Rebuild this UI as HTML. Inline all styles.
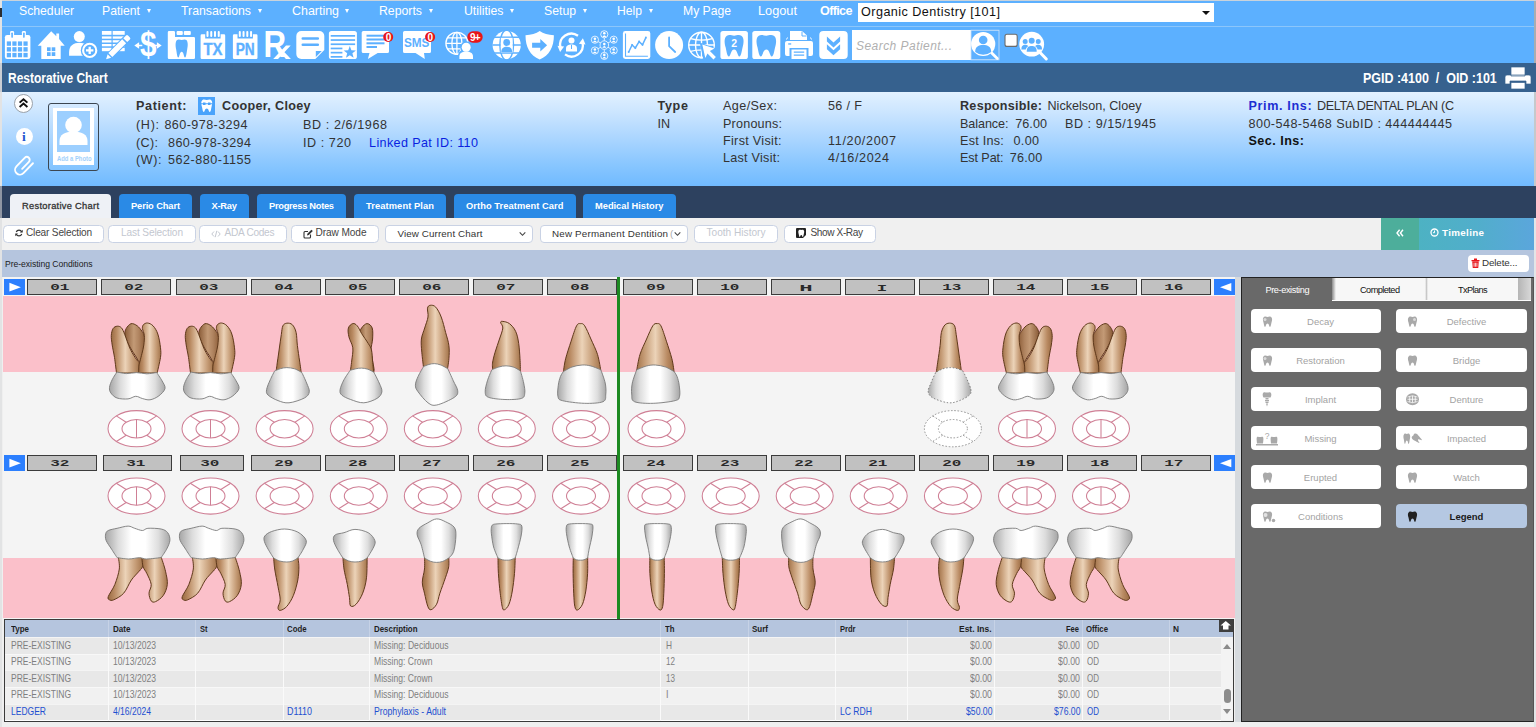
<!DOCTYPE html><html><head><meta charset="utf-8"><title>Restorative Chart</title><style>html,body{margin:0;padding:0}body{width:1536px;height:727px;overflow:hidden;position:relative;background:#efefef;font-family:"Liberation Sans",sans-serif}
.a{position:absolute;display:block}.t{position:absolute;white-space:pre;line-height:1}
.nb{background:#c1c1c1;border:1px solid #3b3b3b;box-sizing:border-box;text-align:center;overflow:hidden;font-size:0;line-height:0}
.nt{font-family:"Liberation Mono",monospace;font-size:9.7px;font-weight:bold;color:#2a2a2a;transform-origin:50% 50%}
</style></head><body>
<div class="a" style="left:0px;top:0px;width:1536.00px;height:727.00px;background:#efefef;"></div>
<div class="a" style="left:0px;top:0px;width:1536.00px;height:1.00px;background:#c9d3dc;"></div>
<div class="a" style="left:2px;top:1px;width:1532.00px;height:62.00px;background:#5cb0ff;"></div>
<div class="a" style="left:2px;top:26px;width:1532.00px;height:1.00px;background:#8cc6fb;"></div>
<div class="a" style="left:0px;top:63px;width:1536.00px;height:28.50px;background:#36618e;"></div>
<div class="a" style="left:2px;top:91.5px;width:1532.00px;height:94.80px;background:;background:linear-gradient(#e2f1ff 0%,#cbe5ff 22%,#aad5ff 50%,#8ac7ff 76%,#70baff 100%);"></div>
<div class="a" style="left:0px;top:186.3px;width:1536.00px;height:31.70px;background:#2d415f;"></div>
<div class="a" style="left:2px;top:218px;width:1532.00px;height:32.00px;background:#f0f0f0;"></div>
<div class="a" style="left:2px;top:250px;width:1532.00px;height:27.00px;background:#b5c5de;"></div>
<span class="t" style="left:19.00px;top:4.00px;font-size:13.6px;color:#fff;transform:scaleX(0.8984);transform-origin:0 0;">Scheduler</span>
<span class="t" style="left:102.00px;top:4.00px;font-size:13.6px;color:#fff;transform:scaleX(0.8977);transform-origin:0 0;">Patient</span>
<div class="a" style="left:146.7px;top:8.6px;border:2.4px solid transparent;border-top:4px solid #fff;border-bottom:0"></div>
<span class="t" style="left:181.00px;top:4.00px;font-size:13.6px;color:#fff;transform:scaleX(0.9052);transform-origin:0 0;">Transactions</span>
<div class="a" style="left:257.7px;top:8.6px;border:2.4px solid transparent;border-top:4px solid #fff;border-bottom:0"></div>
<span class="t" style="left:292.00px;top:4.00px;font-size:13.6px;color:#fff;transform:scaleX(0.9146);transform-origin:0 0;">Charting</span>
<div class="a" style="left:344.7px;top:8.6px;border:2.4px solid transparent;border-top:4px solid #fff;border-bottom:0"></div>
<span class="t" style="left:379.00px;top:4.00px;font-size:13.6px;color:#fff;transform:scaleX(0.9032);transform-origin:0 0;">Reports</span>
<div class="a" style="left:428.7px;top:8.6px;border:2.4px solid transparent;border-top:4px solid #fff;border-bottom:0"></div>
<span class="t" style="left:463.50px;top:4.00px;font-size:13.6px;color:#fff;transform:scaleX(0.9016);transform-origin:0 0;">Utilities</span>
<div class="a" style="left:509.7px;top:8.6px;border:2.4px solid transparent;border-top:4px solid #fff;border-bottom:0"></div>
<span class="t" style="left:544.00px;top:4.00px;font-size:13.6px;color:#fff;transform:scaleX(0.9006);transform-origin:0 0;">Setup</span>
<div class="a" style="left:582.7px;top:8.6px;border:2.4px solid transparent;border-top:4px solid #fff;border-bottom:0"></div>
<span class="t" style="left:616.50px;top:4.00px;font-size:13.6px;color:#fff;transform:scaleX(0.8939);transform-origin:0 0;">Help</span>
<div class="a" style="left:648.7px;top:8.6px;border:2.4px solid transparent;border-top:4px solid #fff;border-bottom:0"></div>
<span class="t" style="left:683.00px;top:4.00px;font-size:13.6px;color:#fff;transform:scaleX(0.8946);transform-origin:0 0;">My Page</span>
<span class="t" style="left:758.00px;top:4.00px;font-size:13.6px;color:#fff;transform:scaleX(0.9380);transform-origin:0 0;">Logout</span>
<span class="t" style="left:820.00px;top:5.00px;font-size:12.6px;font-weight:bold;color:#fff;letter-spacing:-0.641px;">Office</span>
<div class="a" style="left:858px;top:2.5px;width:356.00px;height:19.00px;background:#fff;"></div>
<span class="t" style="left:861.00px;top:6.00px;font-size:12.6px;color:#111;letter-spacing:0.464px;">Organic Dentistry [101]</span>
<div class="a" style="left:1201.5px;top:10.5px;border:4px solid transparent;border-top:4.5px solid #111;border-bottom:0"></div>
<span class="t" style="left:8.10px;top:71.00px;font-size:14px;font-weight:bold;color:#fff;transform:scaleX(0.8543);transform-origin:0 0;">Restorative Chart</span>
<span class="t" style="left:1362.80px;top:71.00px;font-size:14px;font-weight:bold;color:#fff;transform:scaleX(0.8910);transform-origin:0 0;">PGID :4100  /  OID :101</span>
<span class="t" style="left:136.00px;top:100.00px;font-size:12.6px;font-weight:bold;color:#333;letter-spacing:0.616px;">Patient:</span>
<span class="t" style="left:222.00px;top:100.00px;font-size:12.6px;font-weight:bold;color:#333;letter-spacing:0.326px;">Cooper, Cloey</span>
<span class="t" style="left:136.00px;top:119.00px;font-size:12.6px;color:#333;letter-spacing:0.672px;">(H):</span>
<span class="t" style="left:164.40px;top:119.00px;font-size:12.6px;color:#333;letter-spacing:0.424px;">860-978-3294</span>
<span class="t" style="left:136.00px;top:137.00px;font-size:12.6px;color:#333;letter-spacing:0.339px;">(C):</span>
<span class="t" style="left:168.00px;top:137.00px;font-size:12.6px;color:#333;letter-spacing:0.415px;">860-978-3294</span>
<span class="t" style="left:136.00px;top:154.00px;font-size:12.6px;color:#333;letter-spacing:0.573px;">(W):</span>
<span class="t" style="left:168.00px;top:154.00px;font-size:12.6px;color:#333;letter-spacing:0.500px;">562-880-1155</span>
<span class="t" style="left:303.00px;top:119.00px;font-size:12.6px;color:#333;letter-spacing:0.582px;">BD : 2/6/1968</span>
<span class="t" style="left:303.00px;top:137.00px;font-size:12.6px;color:#333;letter-spacing:0.556px;">ID : 720</span>
<span class="t" style="left:369.00px;top:137.00px;font-size:12.6px;color:#0a1fe0;letter-spacing:0.371px;">Linked Pat ID: 110</span>
<span class="t" style="left:657.50px;top:100.00px;font-size:12.6px;font-weight:bold;color:#333;letter-spacing:0.677px;">Type</span>
<span class="t" style="left:657.50px;top:118.00px;font-size:12.6px;color:#333;letter-spacing:-0.094px;">IN</span>
<span class="t" style="left:723.00px;top:100.00px;font-size:12.6px;color:#333;letter-spacing:0.413px;">Age/Sex:</span>
<span class="t" style="left:723.00px;top:118.00px;font-size:12.6px;color:#333;letter-spacing:0.197px;">Pronouns:</span>
<span class="t" style="left:723.00px;top:135.00px;font-size:12.6px;color:#333;letter-spacing:0.314px;">First Visit:</span>
<span class="t" style="left:723.00px;top:152.00px;font-size:12.6px;color:#333;letter-spacing:0.263px;">Last Visit:</span>
<span class="t" style="left:828.00px;top:100.00px;font-size:12.6px;color:#333;letter-spacing:0.359px;">56 / F</span>
<span class="t" style="left:828.00px;top:135.00px;font-size:12.6px;color:#333;letter-spacing:0.655px;">11/20/2007</span>
<span class="t" style="left:828.00px;top:152.00px;font-size:12.6px;color:#333;letter-spacing:0.621px;">4/16/2024</span>
<span class="t" style="left:960.00px;top:100.00px;font-size:12.6px;font-weight:bold;color:#333;letter-spacing:0.266px;">Responsible:</span>
<span class="t" style="left:1047.50px;top:100.00px;font-size:12.6px;color:#333;letter-spacing:0.014px;">Nickelson, Cloey</span>
<span class="t" style="left:960.00px;top:118.00px;font-size:12.6px;color:#333;letter-spacing:-0.074px;">Balance:</span>
<span class="t" style="left:1015.20px;top:118.00px;font-size:12.6px;color:#333;letter-spacing:0.071px;">76.00</span>
<span class="t" style="left:1065.00px;top:118.00px;font-size:12.6px;color:#333;letter-spacing:0.536px;">BD : 9/15/1945</span>
<span class="t" style="left:960.00px;top:135.00px;font-size:12.6px;color:#333;letter-spacing:0.243px;">Est Ins:</span>
<span class="t" style="left:1013.50px;top:135.00px;font-size:12.6px;color:#333;letter-spacing:0.328px;">0.00</span>
<span class="t" style="left:960.00px;top:152.00px;font-size:12.6px;color:#333;letter-spacing:-0.087px;">Est Pat:</span>
<span class="t" style="left:1009.70px;top:152.00px;font-size:12.6px;color:#333;letter-spacing:0.246px;">76.00</span>
<span class="t" style="left:1248.50px;top:100.00px;font-size:12.6px;font-weight:bold;color:#1c2ed2;letter-spacing:0.645px;">Prim. Ins:</span>
<span class="t" style="left:1317.00px;top:100.00px;font-size:12.6px;color:#333;letter-spacing:-0.316px;">DELTA DENTAL PLAN (C</span>
<span class="t" style="left:1248.50px;top:118.00px;font-size:12.6px;color:#333;letter-spacing:0.449px;">800-548-5468 SubID : 444444445</span>
<span class="t" style="left:1248.50px;top:135.00px;font-size:12.6px;font-weight:bold;color:#111;letter-spacing:0.463px;">Sec. Ins:</span>
<div class="a" style="left:14px;top:94.2px;width:19px;height:19px;border-radius:50%;background:#fff;border:1px solid #9aa1a9;box-sizing:border-box"></div>
<svg class="a" style="left:14px;top:94.2px" width="19" height="19" viewBox="0 0 19 19"><path d="M5.6 8.6 L9.5 5.2 L13.4 8.6 M5.6 13 L9.5 9.6 L13.4 13" fill="none" stroke="#111" stroke-width="1.9"/></svg>
<div class="a" style="left:15.5px;top:127.7px;width:17px;height:17px;border-radius:50%;background:#fff"></div>
<span class="t" style="left:22.10px;top:130.00px;font-size:13.5px;font-weight:bold;font-family:&quot;Liberation Serif&quot;,sans-serif;color:#2455cf;">i</span>
<svg class="a" style="left:0;top:0" width="60" height="190" viewBox="0 0 60 190"><g transform="translate(23.6 165) rotate(-46) scale(1.08)"><path d="M-3.500 1.500 H5.500 a2.700 2.700 0 0 0 0 -5.400 H-5.500 a4.500 4.500 0 0 0 0 9 H7.200" fill="none" stroke="#fff" stroke-width="1.750" stroke-linecap="round"/></g></svg>
<div class="a" style="left:47.5px;top:103px;width:51.5px;height:68px;border:1px solid #3c4650;border-radius:3px;box-sizing:border-box"></div>
<div class="a" style="left:53px;top:108px;width:41.00px;height:57.00px;background:#fff;"></div>
<div class="a" style="left:57px;top:111px;width:33.00px;height:41.00px;background:#9ccfff;"></div>
<svg class="a" style="left:57px;top:111px" width="33" height="41" viewBox="0 0 33 41"><circle cx="16.5" cy="14" r="8.3" fill="#fff"/><path d="M2.5 34 v-4 c0-6 5-9.5 14-9.5 s14 3.500 14 9.500 v4 z" fill="#fff"/></svg>
<span class="t" style="left:56.50px;top:156.00px;font-size:6.4px;font-weight:bold;color:#a3d1fb;transform:scaleX(0.9166);transform-origin:0 0;">Add a Photo</span>
<div class="a" style="left:197.5px;top:97px;width:17.50px;height:17.50px;background:#4aa3fb;"></div>
<svg class="a" style="left:197.5px;top:97px" width="17.5" height="17.5" viewBox="0 0 35 35"><path d="M9 6 c3-2 6 0 8.500 0 s5.500-2 8.500 0 c4 3 2 10 1 14 c-1 5-1.500 10-3.500 10 s-2-7-6-7 s-4 7-6 7 s-2.500-5-3.500-10 c-1-4-3-11 1-14z" fill="#fff"/><path d="M6 13.500 h23" stroke="#4aa3fb" stroke-width="2"/><rect x="10" y="11" width="5" height="5" fill="#4aa3fb"/><rect x="20" y="11" width="5" height="5" fill="#4aa3fb"/></svg>
<svg class="a" style="left:1504px;top:65.5px" width="28" height="24" viewBox="0 0 28 24"><path d="M7 1 h14 v9 h-14z M1 11 q0-2 2-2 h22 q2 0 2 2 v7 h-5 v-3 h-16 v3 h-5z M7 16.500 h14 v6.500 h-14z" fill="#fff" stroke="#36618e" stroke-width=".7"/></svg>
<div class="a" style="left:10px;top:194px;width:101.00px;height:24.00px;background:#eef1f6;border-radius:4px 4px 0 0;"></div>
<span class="t" style="left:22.00px;top:202.00px;font-size:9.3px;color:#333;letter-spacing:0.291px;-webkit-text-stroke:.3px #333;">Restorative Chart</span>
<div class="a" style="left:119px;top:194px;width:73.00px;height:24.00px;background:#2a8ae6;border-radius:4px 4px 0 0;"></div>
<span class="t" style="left:131.00px;top:202.00px;font-size:9.3px;font-weight:bold;color:#fff;letter-spacing:-0.113px;">Perio Chart</span>
<div class="a" style="left:199.5px;top:194px;width:49.50px;height:24.00px;background:#2a8ae6;border-radius:4px 4px 0 0;"></div>
<span class="t" style="left:211.50px;top:202.00px;font-size:9.3px;font-weight:bold;color:#fff;letter-spacing:-0.215px;">X-Ray</span>
<div class="a" style="left:257px;top:194px;width:89.00px;height:24.00px;background:#2a8ae6;border-radius:4px 4px 0 0;"></div>
<span class="t" style="left:269.00px;top:202.00px;font-size:9.3px;font-weight:bold;color:#fff;letter-spacing:-0.287px;">Progress Notes</span>
<div class="a" style="left:354px;top:194px;width:92.00px;height:24.00px;background:#2a8ae6;border-radius:4px 4px 0 0;"></div>
<span class="t" style="left:366.00px;top:202.00px;font-size:9.3px;font-weight:bold;color:#fff;letter-spacing:0.103px;">Treatment Plan</span>
<div class="a" style="left:454px;top:194px;width:121.50px;height:24.00px;background:#2a8ae6;border-radius:4px 4px 0 0;"></div>
<span class="t" style="left:466.00px;top:202.00px;font-size:9.3px;font-weight:bold;color:#fff;letter-spacing:0.074px;">Ortho Treatment Card</span>
<div class="a" style="left:583px;top:194px;width:92.50px;height:24.00px;background:#2a8ae6;border-radius:4px 4px 0 0;"></div>
<span class="t" style="left:595.00px;top:202.00px;font-size:9.3px;font-weight:bold;color:#fff;letter-spacing:-0.016px;">Medical History</span>
<div class="a" style="left:2.7px;top:224.5px;width:101.7px;height:18px;background:#fff;border:1px solid #c9d2e4;border-radius:4.5px;box-sizing:border-box"></div>
<span class="t" style="left:26.00px;top:228.00px;font-size:10.1px;color:#444;letter-spacing:-0.175px;">Clear Selection</span>
<div class="a" style="left:107.7px;top:224.5px;width:88.2px;height:18px;background:#fff;border:1px solid #c9d2e4;border-radius:4.5px;box-sizing:border-box"></div>
<span class="t" style="left:121.00px;top:228.00px;font-size:10.1px;color:#c3c7cf;letter-spacing:-0.109px;">Last Selection</span>
<div class="a" style="left:199.2px;top:224.5px;width:88.2px;height:18px;background:#fff;border:1px solid #c9d2e4;border-radius:4.5px;box-sizing:border-box"></div>
<span class="t" style="left:224.50px;top:228.00px;font-size:10.1px;color:#c3c7cf;letter-spacing:-0.273px;">ADA Codes</span>
<div class="a" style="left:290.7px;top:224.5px;width:88.7px;height:18px;background:#fff;border:1px solid #c9d2e4;border-radius:4.5px;box-sizing:border-box"></div>
<span class="t" style="left:315.50px;top:228.00px;font-size:10.1px;color:#444;letter-spacing:-0.076px;">Draw Mode</span>
<div class="a" style="left:693.7px;top:224.5px;width:84.2px;height:18px;background:#fff;border:1px solid #c9d2e4;border-radius:4.5px;box-sizing:border-box"></div>
<span class="t" style="left:706.50px;top:228.00px;font-size:10.1px;color:#c3c7cf;letter-spacing:0.008px;">Tooth History</span>
<div class="a" style="left:783.7px;top:224.5px;width:92.2px;height:18px;background:#fff;border:1px solid #c9d2e4;border-radius:4.5px;box-sizing:border-box"></div>
<span class="t" style="left:810.50px;top:228.00px;font-size:10.1px;color:#444;letter-spacing:-0.401px;">Show X-Ray</span>
<svg class="a" style="left:14.6px;top:229.2px" width="8" height="8" viewBox="0 0 9 9"><path d="M7.600 3.400 A3.300 3.300 0 0 0 1.400 3.400 M1.400 5.600 A3.300 3.300 0 0 0 7.600 5.600" fill="none" stroke="#333" stroke-width="1.300"/><path d="M8.700 0.800 v3.200 h-3.200z M0.300 8.200 v-3.200 h3.200z" fill="#333"/></svg>
<svg class="a" style="left:211px;top:230px" width="10" height="8" viewBox="0 0 10 8"><path d="M3 1.500 L0.800 4 L3 6.500 M7 1.500 L9.200 4 L7 6.500 M5.800 0.800 L4.200 7.200" fill="none" stroke="#c3c7cf" stroke-width="1"/></svg>
<svg class="a" style="left:302.5px;top:228.5px" width="10" height="10" viewBox="0 0 10 10"><path d="M7.500 5.500 v2.500 q0 1-1 1 h-4.500 q-1 0-1-1 v-4.500 q0-1 1-1 h3" fill="none" stroke="#333" stroke-width="1.100"/><path d="M4 6.500 l0.400-1.800 l4-4 l1.400 1.400 l-4 4z" fill="#333"/></svg>
<svg class="a" style="left:796px;top:228px" width="10.500" height="10.500" viewBox="0 0 21 21"><rect x="0" y="0" width="20" height="20" rx="2" fill="#222"/><path d="M6 4 c2-1 3 0 4.500 0 s2.500-1 4.500 0 c2.500 2 1 6 0.500 8.500 c-0.500 2.500-1 5.500-2 5.500 s-1-4-3-4 s-2 4-3 4 s-1.500-3-2-5.500 c-0.500-2.500-2-6.500 0.500-8.500z" fill="#fff"/><path d="M14 20 l6-6 v6z" fill="#fff"/></svg>
<div class="a" style="left:385px;top:224.5px;width:148px;height:18px;background:#fff;border:1px solid #c9d2e4;border-radius:4px;box-sizing:border-box"></div>
<span class="t" style="left:397.50px;top:229.00px;font-size:9.8px;color:#333;letter-spacing:0.109px;">View Current Chart</span>
<svg class="a" style="left:518.5px;top:230.5px" width="7" height="6" viewBox="0 0 7 6"><path d="M0.700 1.300 L3.500 4.300 L6.300 1.300" fill="none" stroke="#444" stroke-width="1.100"/></svg>
<div class="a" style="left:539.5px;top:224.5px;width:148.0px;height:18px;background:#fff;border:1px solid #c9d2e4;border-radius:4px;box-sizing:border-box"></div>
<span class="t" style="left:552.00px;top:229.00px;font-size:9.8px;color:#333;letter-spacing:0.198px;">New Permanent Dentition</span>
<svg class="a" style="left:673.5px;top:230.5px" width="7" height="6" viewBox="0 0 7 6"><path d="M0.700 1.300 L3.500 4.300 L6.300 1.300" fill="none" stroke="#444" stroke-width="1.100"/></svg>
<span class="t" style="left:670.00px;top:229.00px;font-size:9.8px;color:#aaa;">(</span>
<div class="a" style="left:1381px;top:218px;width:37.50px;height:32.00px;background:#4dae9b;"></div>
<div class="a" style="left:1418.5px;top:218px;width:115.50px;height:32.00px;background:;background:linear-gradient(90deg,#4db2c3 0%,#51aecb 50%,#5ba6dc 100%);"></div>
<svg class="a" style="left:1396px;top:228.500px" width="8" height="8" viewBox="0 0 8 8"><path d="M3.600 0.800 L1 4 L3.600 7.200 M7 0.800 L4.400 4 L7 7.200" fill="none" stroke="#fff" stroke-width="1.400"/></svg>
<svg class="a" style="left:1430px;top:228px" width="9" height="9" viewBox="0 0 9 9"><circle cx="4.500" cy="4.500" r="3.500" fill="none" stroke="#fff" stroke-width="1.300"/><path d="M4.500 2.500 v2.200 h-1.500" fill="none" stroke="#fff" stroke-width="1"/></svg>
<span class="t" style="left:1442.00px;top:228.00px;font-size:9.8px;font-weight:bold;color:#fff;letter-spacing:0.346px;">Timeline</span>
<span class="t" style="left:5.00px;top:260.00px;font-size:8.6px;color:#1b1b1b;letter-spacing:-0.040px;">Pre-existing Conditions</span>
<div class="a" style="left:1468px;top:255px;width:61.00px;height:16.50px;background:#fff;border-radius:4px;"></div>
<svg class="a" style="left:1471px;top:258px" width="9" height="10.500" viewBox="0 0 18 21"><path d="M1 4 h16 v2.500 h-16z M6 1 h6 v3 h-6z M2.500 7 h13 l-1 13 h-11z" fill="#e8161b"/><path d="M6.200 9.500 v8 M9 9.500 v8 M11.800 9.500 v8" stroke="#fff" stroke-width="1.500"/></svg>
<span class="t" style="left:1482.00px;top:258.00px;font-size:9.8px;color:#333;letter-spacing:-0.125px;">Delete...</span>
<div class="a" style="left:3px;top:277px;width:1232.00px;height:341.50px;background:#f4f4f4;"></div>
<div class="a" style="left:3px;top:295.5px;width:1232.00px;height:76.50px;background:#fbc0ca;"></div>
<div class="a" style="left:3px;top:558px;width:1232.00px;height:59.50px;background:#fbc0ca;"></div>
<div class="a" style="left:1235px;top:277px;width:6.50px;height:445.00px;background:#d6dade;"></div>
<div class="a nb" style="left:27px;top:279px;width:70px;height:15.5px"></div>
<span class="t nt" style="left:53.98px;top:283px;transform:scaleX(1.65)">01</span>
<div class="a nb" style="left:101px;top:279px;width:70px;height:15.5px"></div>
<span class="t nt" style="left:127.98px;top:283px;transform:scaleX(1.65)">02</span>
<div class="a nb" style="left:176px;top:279px;width:70.5px;height:15.5px"></div>
<span class="t nt" style="left:203.23px;top:283px;transform:scaleX(1.65)">03</span>
<div class="a nb" style="left:250.5px;top:279px;width:70.5px;height:15.5px"></div>
<span class="t nt" style="left:277.73px;top:283px;transform:scaleX(1.65)">04</span>
<div class="a nb" style="left:325px;top:279px;width:70px;height:15.5px"></div>
<span class="t nt" style="left:351.98px;top:283px;transform:scaleX(1.65)">05</span>
<div class="a nb" style="left:399px;top:279px;width:70px;height:15.5px"></div>
<span class="t nt" style="left:425.98px;top:283px;transform:scaleX(1.65)">06</span>
<div class="a nb" style="left:473px;top:279px;width:70px;height:15.5px"></div>
<span class="t nt" style="left:499.98px;top:283px;transform:scaleX(1.65)">07</span>
<div class="a nb" style="left:547px;top:279px;width:70px;height:15.5px"></div>
<span class="t nt" style="left:573.98px;top:283px;transform:scaleX(1.65)">08</span>
<div class="a nb" style="left:623px;top:279px;width:70px;height:15.5px"></div>
<span class="t nt" style="left:649.98px;top:283px;transform:scaleX(1.65)">09</span>
<div class="a nb" style="left:697px;top:279px;width:70px;height:15.5px"></div>
<span class="t nt" style="left:723.98px;top:283px;transform:scaleX(1.65)">10</span>
<div class="a nb" style="left:771px;top:279.2px;width:70px;height:15.800000000000011px"></div>
<span class="t nt" style="left:803.09px;top:284px;transform:scaleX(2.3)">H</span>
<div class="a nb" style="left:845px;top:279.2px;width:70px;height:15.800000000000011px"></div>
<span class="t nt" style="left:879.09px;top:284px;transform:scaleX(1.8)">I</span>
<div class="a nb" style="left:919px;top:279px;width:70px;height:15.5px"></div>
<span class="t nt" style="left:945.98px;top:283px;transform:scaleX(1.65)">13</span>
<div class="a nb" style="left:993px;top:279px;width:70px;height:15.5px"></div>
<span class="t nt" style="left:1019.98px;top:283px;transform:scaleX(1.65)">14</span>
<div class="a nb" style="left:1067px;top:279px;width:70px;height:15.5px"></div>
<span class="t nt" style="left:1093.98px;top:283px;transform:scaleX(1.65)">15</span>
<div class="a nb" style="left:1141px;top:279px;width:70px;height:15.5px"></div>
<span class="t nt" style="left:1167.98px;top:283px;transform:scaleX(1.65)">16</span>
<div class="a" style="left:4px;top:279px;width:20.60px;height:15.50px;background:#2c7ffe;"></div>
<svg class="a" style="left:0;top:0" width="1536" height="727"><polygon points="9.4,282.84999999999997 20.9,287.15 9.4,291.45" fill="#fff"/></svg>
<div class="a" style="left:1214px;top:279px;width:21.00px;height:15.50px;background:#2c7ffe;"></div>
<svg class="a" style="left:0;top:0" width="1536" height="727"><polygon points="1231.3,282.95 1220.0,287.15 1231.3,291.34999999999997" fill="#fff"/></svg>
<div class="a nb" style="left:27px;top:455px;width:70px;height:15.5px"></div>
<span class="t nt" style="left:53.98px;top:459px;transform:scaleX(1.65)">32</span>
<div class="a nb" style="left:102.7px;top:455px;width:69.8px;height:15.5px"></div>
<span class="t nt" style="left:129.58px;top:459px;transform:scaleX(1.65)">31</span>
<div class="a nb" style="left:179.6px;top:455px;width:64.20000000000002px;height:15.5px"></div>
<span class="t nt" style="left:203.68px;top:459px;transform:scaleX(1.65)">30</span>
<div class="a nb" style="left:250.5px;top:455px;width:70.5px;height:15.5px"></div>
<span class="t nt" style="left:277.73px;top:459px;transform:scaleX(1.65)">29</span>
<div class="a nb" style="left:325px;top:455px;width:70px;height:15.5px"></div>
<span class="t nt" style="left:351.98px;top:459px;transform:scaleX(1.65)">28</span>
<div class="a nb" style="left:399px;top:455px;width:70px;height:15.5px"></div>
<span class="t nt" style="left:425.98px;top:459px;transform:scaleX(1.65)">27</span>
<div class="a nb" style="left:473px;top:455px;width:70px;height:15.5px"></div>
<span class="t nt" style="left:499.98px;top:459px;transform:scaleX(1.65)">26</span>
<div class="a nb" style="left:547px;top:455px;width:70px;height:15.5px"></div>
<span class="t nt" style="left:573.98px;top:459px;transform:scaleX(1.65)">25</span>
<div class="a nb" style="left:623px;top:455px;width:70px;height:15.5px"></div>
<span class="t nt" style="left:649.98px;top:459px;transform:scaleX(1.65)">24</span>
<div class="a nb" style="left:697px;top:455px;width:70px;height:15.5px"></div>
<span class="t nt" style="left:723.98px;top:459px;transform:scaleX(1.65)">23</span>
<div class="a nb" style="left:771px;top:455px;width:70px;height:15.5px"></div>
<span class="t nt" style="left:797.98px;top:459px;transform:scaleX(1.65)">22</span>
<div class="a nb" style="left:845px;top:455px;width:70px;height:15.5px"></div>
<span class="t nt" style="left:871.98px;top:459px;transform:scaleX(1.65)">21</span>
<div class="a nb" style="left:919px;top:455px;width:70px;height:15.5px"></div>
<span class="t nt" style="left:945.98px;top:459px;transform:scaleX(1.65)">20</span>
<div class="a nb" style="left:993px;top:455px;width:70px;height:15.5px"></div>
<span class="t nt" style="left:1019.98px;top:459px;transform:scaleX(1.65)">19</span>
<div class="a nb" style="left:1067px;top:455px;width:70px;height:15.5px"></div>
<span class="t nt" style="left:1093.98px;top:459px;transform:scaleX(1.65)">18</span>
<div class="a nb" style="left:1141px;top:455px;width:70px;height:15.5px"></div>
<span class="t nt" style="left:1167.98px;top:459px;transform:scaleX(1.65)">17</span>
<div class="a" style="left:4px;top:455px;width:20.60px;height:15.50px;background:#2c7ffe;"></div>
<svg class="a" style="left:0;top:0" width="1536" height="727"><polygon points="9.4,458.84999999999997 20.9,463.15 9.4,467.45" fill="#fff"/></svg>
<div class="a" style="left:1214px;top:455px;width:21.00px;height:15.50px;background:#2c7ffe;"></div>
<svg class="a" style="left:0;top:0" width="1536" height="727"><polygon points="1231.3,458.95 1220.0,463.15 1231.3,467.34999999999997" fill="#fff"/></svg>
<svg class="a" style="left:0;top:0" width="1536" height="727" viewBox="0 0 1536 727"><defs><linearGradient id="gr" x1="0" x2="1" y1="0" y2="0"><stop offset="0" stop-color="#9a6b43"/><stop offset=".18" stop-color="#b98a62"/><stop offset=".5" stop-color="#ecd3b8"/><stop offset=".8" stop-color="#c49a74"/><stop offset="1" stop-color="#a3744b"/></linearGradient><linearGradient id="gd" x1="0" x2="1" y1="0" y2="0"><stop offset="0" stop-color="#8a5c38"/><stop offset=".45" stop-color="#c39a76"/><stop offset=".7" stop-color="#b08460"/><stop offset="1" stop-color="#8f603b"/></linearGradient><linearGradient id="gc" x1="0" x2="1" y1="0" y2="0"><stop offset="0" stop-color="#a6a6a6"/><stop offset=".2" stop-color="#dcdcdc"/><stop offset=".4" stop-color="#ffffff"/><stop offset=".62" stop-color="#ffffff"/><stop offset=".82" stop-color="#dedede"/><stop offset="1" stop-color="#a8a8a8"/></linearGradient></defs><g transform="translate(136.5 372)"><path d="M-11.7 -38.0C-11.8 -39.9 -11.3 -41.8 -10.3 -43.5C-9.3 -45.2 -7.3 -47.8 -5.5 -48.3C-3.7 -48.8 -1.1 -47.5 0.7 -46.2C2.5 -44.9 4.3 -42.4 5.5 -40.7C6.7 -39.0 7.3 -38.3 7.8 -36.0C8.2 -33.7 8.5 -30.0 8.2 -27.0C7.9 -24.0 6.8 -20.8 6.0 -18.0C5.2 -15.2 4.6 -10.3 3.4 -10.0C2.2 -9.7 0.6 -13.7 -1.0 -16.0C-2.6 -18.3 -4.5 -21.3 -6.0 -24.0C-7.5 -26.7 -9.1 -29.7 -10.0 -32.0C-10.9 -34.3 -11.6 -36.1 -11.7 -38.0Z" fill="url(#gd)" stroke="#603a1c" stroke-width="1"/><path d="M-20.0 1.0C-20.0 1.0 -21.3 -9.9 -22.0 -14.6C-22.7 -19.3 -23.8 -23.3 -24.3 -27.0C-24.8 -30.7 -25.4 -33.9 -25.2 -36.6C-25.0 -39.4 -24.4 -42.0 -23.4 -43.5C-22.4 -45.0 -20.7 -45.7 -19.3 -45.8C-17.9 -45.9 -16.4 -45.6 -15.1 -44.2C-13.8 -42.8 -13.2 -40.9 -11.7 -37.3C-10.2 -33.7 -8.2 -26.9 -6.2 -22.8C-4.2 -18.7 -1.5 -14.7 0.0 -12.5C1.5 -10.3 2.8 -9.8 2.8 -9.8C2.8 -9.8 2.6 1.0 2.6 1.0C2.6 1.0 -20.0 1.0 -20.0 1.0Z" fill="url(#gr)" stroke="#603a1c" stroke-width="1"/><path d="M2.2 1.0C2.2 1.0 2.2 -4.1 2.4 -6.0C2.6 -7.9 2.9 -8.4 3.4 -10.5C3.9 -12.6 4.8 -15.9 5.5 -18.7C6.2 -21.4 6.9 -24.0 7.3 -27.0C7.7 -30.0 8.0 -33.9 7.8 -36.6C7.6 -39.4 6.1 -41.7 5.9 -43.5C5.8 -45.3 6.1 -46.4 6.9 -47.3C7.8 -48.2 9.4 -49.2 11.0 -49.0C12.6 -48.8 14.8 -48.0 16.5 -46.2C18.2 -44.4 20.1 -41.7 21.3 -38.0C22.6 -34.3 23.6 -28.1 24.0 -24.2C24.4 -20.3 24.6 -18.8 24.0 -14.6C23.4 -10.4 20.6 1.0 20.6 1.0C20.6 1.0 2.2 1.0 2.2 1.0Z" fill="url(#gr)" stroke="#603a1c" stroke-width="1"/><path d="M-19.5 0.0C-19.5 0.0 -23.1 5.1 -24.3 7.7C-25.6 10.3 -26.8 13.2 -27.0 15.4C-27.2 17.6 -26.9 19.1 -25.7 20.9C-24.4 22.7 -22.4 25.0 -19.5 26.0C-16.6 27.0 -11.6 27.2 -8.5 26.9C-5.4 26.6 -3.2 24.4 -0.8 24.3C1.6 24.2 3.4 25.9 5.8 26.5C8.2 27.1 10.8 28.2 13.5 27.8C16.2 27.4 19.8 25.8 22.3 23.9C24.8 22.0 27.9 19.1 28.5 16.6C29.1 14.1 27.0 11.6 25.6 8.9C24.2 6.2 20.1 0.5 20.1 0.5C20.1 0.5 13.3 1.8 10.0 1.8C6.7 1.8 3.3 0.6 0.0 0.6C-3.3 0.6 -6.8 1.7 -10.0 1.6C-13.2 1.5 -19.5 0.0 -19.5 0.0Z" fill="url(#gc)" stroke="#7b7b7b" stroke-width=".9"/></g><g fill="none" stroke="#cf7f95" stroke-width="1.05"><ellipse cx="136.5" cy="428.7" rx="28.5" ry="18.1" fill="#fff"/><ellipse cx="136.5" cy="428.7" rx="14.5" ry="9.2"/><path d="M126.2 422.2L116.3 415.9"/><path d="M126.2 435.2L116.3 441.5"/><path d="M146.8 422.2L156.7 415.9"/><path d="M146.8 435.2L156.7 441.5"/><path d="M136.5 419.5V437.9"/></g><g transform="translate(210.5 372)"><path d="M-11.7 -38.0C-11.8 -39.9 -11.3 -41.8 -10.3 -43.5C-9.3 -45.2 -7.3 -47.8 -5.5 -48.3C-3.7 -48.8 -1.1 -47.5 0.7 -46.2C2.5 -44.9 4.3 -42.4 5.5 -40.7C6.7 -39.0 7.3 -38.3 7.8 -36.0C8.2 -33.7 8.5 -30.0 8.2 -27.0C7.9 -24.0 6.8 -20.8 6.0 -18.0C5.2 -15.2 4.6 -10.3 3.4 -10.0C2.2 -9.7 0.6 -13.7 -1.0 -16.0C-2.6 -18.3 -4.5 -21.3 -6.0 -24.0C-7.5 -26.7 -9.1 -29.7 -10.0 -32.0C-10.9 -34.3 -11.6 -36.1 -11.7 -38.0Z" fill="url(#gd)" stroke="#603a1c" stroke-width="1"/><path d="M-20.0 1.0C-20.0 1.0 -21.3 -9.9 -22.0 -14.6C-22.7 -19.3 -23.8 -23.3 -24.3 -27.0C-24.8 -30.7 -25.4 -33.9 -25.2 -36.6C-25.0 -39.4 -24.4 -42.0 -23.4 -43.5C-22.4 -45.0 -20.7 -45.7 -19.3 -45.8C-17.9 -45.9 -16.4 -45.6 -15.1 -44.2C-13.8 -42.8 -13.2 -40.9 -11.7 -37.3C-10.2 -33.7 -8.2 -26.9 -6.2 -22.8C-4.2 -18.7 -1.5 -14.7 0.0 -12.5C1.5 -10.3 2.8 -9.8 2.8 -9.8C2.8 -9.8 2.6 1.0 2.6 1.0C2.6 1.0 -20.0 1.0 -20.0 1.0Z" fill="url(#gr)" stroke="#603a1c" stroke-width="1"/><path d="M2.2 1.0C2.2 1.0 2.2 -4.1 2.4 -6.0C2.6 -7.9 2.9 -8.4 3.4 -10.5C3.9 -12.6 4.8 -15.9 5.5 -18.7C6.2 -21.4 6.9 -24.0 7.3 -27.0C7.7 -30.0 8.0 -33.9 7.8 -36.6C7.6 -39.4 6.1 -41.7 5.9 -43.5C5.8 -45.3 6.1 -46.4 6.9 -47.3C7.8 -48.2 9.4 -49.2 11.0 -49.0C12.6 -48.8 14.8 -48.0 16.5 -46.2C18.2 -44.4 20.1 -41.7 21.3 -38.0C22.6 -34.3 23.6 -28.1 24.0 -24.2C24.4 -20.3 24.6 -18.8 24.0 -14.6C23.4 -10.4 20.6 1.0 20.6 1.0C20.6 1.0 2.2 1.0 2.2 1.0Z" fill="url(#gr)" stroke="#603a1c" stroke-width="1"/><path d="M-19.5 0.0C-19.5 0.0 -23.1 5.1 -24.3 7.7C-25.6 10.3 -26.8 13.2 -27.0 15.4C-27.2 17.6 -26.9 19.1 -25.7 20.9C-24.4 22.7 -22.4 25.0 -19.5 26.0C-16.6 27.0 -11.6 27.2 -8.5 26.9C-5.4 26.6 -3.2 24.4 -0.8 24.3C1.6 24.2 3.4 25.9 5.8 26.5C8.2 27.1 10.8 28.2 13.5 27.8C16.2 27.4 19.8 25.8 22.3 23.9C24.8 22.0 27.9 19.1 28.5 16.6C29.1 14.1 27.0 11.6 25.6 8.9C24.2 6.2 20.1 0.5 20.1 0.5C20.1 0.5 13.3 1.8 10.0 1.8C6.7 1.8 3.3 0.6 0.0 0.6C-3.3 0.6 -6.8 1.7 -10.0 1.6C-13.2 1.5 -19.5 0.0 -19.5 0.0Z" fill="url(#gc)" stroke="#7b7b7b" stroke-width=".9"/></g><g fill="none" stroke="#cf7f95" stroke-width="1.05"><ellipse cx="210.5" cy="428.7" rx="28.5" ry="18.1" fill="#fff"/><ellipse cx="210.5" cy="428.7" rx="14.5" ry="9.2"/><path d="M200.2 422.2L190.3 415.9"/><path d="M200.2 435.2L190.3 441.5"/><path d="M220.8 422.2L230.7 415.9"/><path d="M220.8 435.2L230.7 441.5"/><path d="M210.5 419.5V437.9"/></g><g transform="translate(284.6 372)"><path d="M-8.8 1.0C-8.8 1.0 -8.2 -2.8 -7.7 -6.6C-7.2 -10.4 -6.2 -16.9 -5.5 -22.0C-4.8 -27.1 -3.9 -33.4 -3.3 -37.4C-2.7 -41.4 -2.6 -44.3 -1.7 -46.2C-0.8 -48.1 0.6 -48.6 2.2 -48.8C3.8 -49.0 6.2 -48.8 7.7 -47.3C9.2 -45.8 10.7 -43.1 11.5 -39.6C12.3 -36.1 12.2 -31.2 12.8 -26.4C13.4 -21.6 14.3 -15.6 15.0 -11.0C15.7 -6.4 16.7 1.0 16.7 1.0C16.7 1.0 -8.8 1.0 -8.8 1.0Z" fill="url(#gr)" stroke="#603a1c" stroke-width="1"/><path d="M-9.9 -1.1C-9.9 -1.1 -13.0 4.6 -14.3 7.7C-15.7 10.8 -17.6 15.0 -18.0 17.6C-18.4 20.2 -18.4 21.3 -16.5 23.1C-14.6 24.9 -10.1 27.3 -6.6 28.6C-3.1 29.9 0.0 31.2 4.4 30.8C8.8 30.4 16.4 27.8 19.8 26.0C23.2 24.2 24.3 22.3 24.7 19.8C25.1 17.3 23.2 14.2 22.0 11.0C20.8 7.8 17.2 0.5 17.2 0.5C17.2 0.5 12.5 -2.4 10.0 -3.2C7.5 -4.0 4.5 -4.4 2.2 -4.4C-0.1 -4.4 -2.0 -4.0 -4.0 -3.4C-6.0 -2.8 -9.9 -1.1 -9.9 -1.1Z" fill="url(#gc)" stroke="#7b7b7b" stroke-width=".9"/></g><g fill="none" stroke="#cf7f95" stroke-width="1.05"><ellipse cx="284.6" cy="428.7" rx="28.5" ry="18.1" fill="#fff"/><ellipse cx="284.6" cy="428.7" rx="14.5" ry="9.2"/><path d="M274.3 422.2L264.4 415.9"/><path d="M274.3 435.2L264.4 441.5"/><path d="M294.9 422.2L304.8 415.9"/><path d="M294.9 435.2L304.8 441.5"/></g><g transform="translate(358.8 372)"><path d="M2.8 -44.0C4.2 -46.1 6.5 -48.4 8.3 -48.4C10.1 -48.4 12.5 -46.6 13.4 -44.0C14.3 -41.4 14.0 -36.7 13.8 -33.0C13.6 -29.3 12.2 -25.7 12.2 -22.0C12.2 -18.3 13.4 -14.7 13.8 -11.0C14.2 -7.3 16.2 -1.8 14.9 0.0C13.6 1.8 7.8 3.3 6.0 0.0C4.2 -3.3 5.0 -14.0 4.0 -20.0C3.0 -26.0 0.2 -32.0 0.0 -36.0C-0.2 -40.0 1.4 -41.9 2.8 -44.0Z" fill="url(#gd)" stroke="#603a1c" stroke-width="1"/><path d="M-8.6 0.0C-8.6 0.0 -7.5 -7.0 -7.1 -11.0C-6.7 -15.0 -5.5 -20.2 -6.0 -24.2C-6.5 -28.2 -9.2 -31.9 -9.9 -35.2C-10.6 -38.5 -11.1 -41.8 -10.4 -44.0C-9.8 -46.2 -7.5 -48.0 -6.0 -48.4C-4.5 -48.8 -3.1 -47.9 -1.6 -46.2C-0.1 -44.6 1.0 -41.4 2.8 -38.5C4.6 -35.6 7.8 -31.4 9.4 -28.6C11.1 -25.9 12.0 -24.9 12.7 -22.0C13.4 -19.1 13.4 -14.8 13.8 -11.0C14.2 -7.2 14.9 1.0 14.9 1.0C14.9 1.0 -8.6 0.0 -8.6 0.0Z" fill="url(#gr)" stroke="#603a1c" stroke-width="1"/><path d="M-8.6 -1.7C-8.6 -1.7 -13.1 4.5 -14.8 7.7C-16.5 10.9 -18.3 15.0 -18.7 17.6C-19.1 20.2 -18.8 21.5 -17.0 23.1C-15.2 24.8 -11.9 26.2 -8.2 27.5C-4.5 28.8 0.6 31.0 5.0 30.8C9.4 30.6 15.2 28.2 18.2 26.4C21.2 24.6 22.7 22.4 23.1 19.8C23.5 17.2 21.8 14.3 20.4 11.0C19.0 7.7 14.9 0.0 14.9 0.0C14.9 0.0 11.0 -2.1 9.0 -2.8C7.0 -3.4 4.8 -3.8 2.8 -3.9C0.8 -4.0 -1.1 -3.6 -3.0 -3.2C-4.9 -2.8 -8.6 -1.7 -8.6 -1.7Z" fill="url(#gc)" stroke="#7b7b7b" stroke-width=".9"/></g><g fill="none" stroke="#cf7f95" stroke-width="1.05"><ellipse cx="358.8" cy="428.7" rx="28.5" ry="18.1" fill="#fff"/><ellipse cx="358.8" cy="428.7" rx="14.5" ry="9.2"/><path d="M348.5 422.2L338.6 415.9"/><path d="M348.5 435.2L338.6 441.5"/><path d="M369.1 422.2L379.0 415.9"/><path d="M369.1 435.2L379.0 441.5"/></g><g transform="translate(432.8 372)"><path d="M-9.2 -4.0C-9.2 -4.0 -10.6 -15.0 -11.0 -19.8C-11.4 -24.6 -11.9 -29.0 -11.4 -33.0C-10.9 -37.0 -9.2 -40.3 -8.1 -44.0C-7.0 -47.7 -5.3 -51.7 -4.8 -55.0C-4.3 -58.3 -5.7 -61.8 -5.3 -63.8C-4.9 -65.8 -4.0 -66.5 -2.6 -66.7C-1.2 -66.9 1.1 -66.9 2.9 -64.9C4.7 -63.0 6.8 -59.2 8.4 -55.0C10.1 -50.8 11.5 -44.4 12.8 -39.6C14.1 -34.8 15.6 -30.8 16.1 -26.4C16.7 -22.0 16.4 -17.3 16.1 -13.2C15.8 -9.1 14.5 -2.0 14.5 -2.0C14.5 -2.0 -9.2 -4.0 -9.2 -4.0Z" fill="url(#gr)" stroke="#603a1c" stroke-width="1"/><path d="M-9.2 -5.5C-9.2 -5.5 -13.3 1.3 -14.7 4.4C-16.1 7.5 -17.4 10.6 -17.4 13.2C-17.4 15.8 -16.8 16.9 -14.7 19.8C-12.6 22.7 -7.9 28.6 -4.8 30.8C-1.7 33.0 -0.4 33.9 4.0 33.0C8.4 32.1 18.1 27.7 21.6 25.3C25.1 22.9 25.1 21.4 24.9 18.7C24.7 15.9 22.1 12.5 20.5 8.8C18.9 5.1 15.0 -3.3 15.0 -3.3C15.0 -3.3 10.2 -6.2 8.0 -7.0C5.8 -7.8 3.8 -8.3 1.8 -8.4C-0.2 -8.5 -2.2 -8.0 -4.0 -7.5C-5.8 -7.0 -9.2 -5.5 -9.2 -5.5Z" fill="url(#gc)" stroke="#7b7b7b" stroke-width=".9"/></g><g fill="none" stroke="#cf7f95" stroke-width="1.05"><ellipse cx="432.8" cy="428.7" rx="28.5" ry="18.1" fill="#fff"/><ellipse cx="432.8" cy="428.7" rx="14.5" ry="9.2"/><path d="M422.5 422.2L412.6 415.9"/><path d="M422.5 435.2L412.6 441.5"/><path d="M443.1 422.2L453.0 415.9"/><path d="M443.1 435.2L453.0 441.5"/></g><g transform="translate(506.8 372)"><path d="M-13.9 -1.0C-13.9 -1.0 -14.7 -5.7 -14.3 -8.8C-13.9 -11.9 -12.9 -15.8 -11.7 -19.8C-10.5 -23.8 -8.6 -29.0 -7.3 -33.0C-6.0 -37.0 -4.2 -41.2 -4.0 -44.0C-3.8 -46.8 -6.2 -48.4 -6.2 -49.5C-6.2 -50.6 -5.5 -50.8 -4.0 -50.6C-2.5 -50.4 0.5 -50.0 2.6 -48.4C4.7 -46.8 7.3 -44.0 8.8 -40.7C10.4 -37.4 11.2 -33.2 11.9 -28.6C12.6 -24.0 12.9 -17.8 13.2 -13.2C13.5 -8.6 13.6 -1.0 13.6 -1.0C13.6 -1.0 -13.9 -1.0 -13.9 -1.0Z" fill="url(#gr)" stroke="#603a1c" stroke-width="1"/><path d="M-15.0 -2.2C-15.0 -2.2 -18.3 5.1 -19.4 8.8C-20.5 12.5 -21.8 17.1 -21.6 19.8C-21.4 22.6 -21.6 24.0 -18.3 25.3C-15.0 26.6 -7.3 27.3 -1.8 27.5C3.7 27.7 11.4 27.5 14.7 26.4C18.0 25.3 17.6 23.5 18.0 20.9C18.4 18.3 17.6 14.7 16.9 11.0C16.2 7.3 13.6 -1.1 13.6 -1.1C13.6 -1.1 9.4 -3.9 7.0 -4.8C4.6 -5.6 1.8 -6.2 -0.7 -6.2C-3.2 -6.2 -5.6 -5.7 -8.0 -5.0C-10.4 -4.3 -15.0 -2.2 -15.0 -2.2Z" fill="url(#gc)" stroke="#7b7b7b" stroke-width=".9"/></g><g fill="none" stroke="#cf7f95" stroke-width="1.05"><ellipse cx="506.8" cy="428.7" rx="28.5" ry="18.1" fill="#fff"/><ellipse cx="506.8" cy="428.7" rx="14.5" ry="9.2"/><path d="M496.5 422.2L486.6 415.9"/><path d="M496.5 435.2L486.6 441.5"/><path d="M517.1 422.2L527.0 415.9"/><path d="M517.1 435.2L527.0 441.5"/></g><g transform="translate(581.0 372)"><path d="M-17.6 0.0C-17.6 0.0 -16.7 -8.1 -15.4 -13.2C-14.1 -18.3 -11.7 -25.3 -9.9 -30.8C-8.1 -36.3 -6.0 -43.3 -4.4 -46.2C-2.8 -49.1 -1.9 -48.4 -0.5 -48.4C0.9 -48.4 2.0 -48.8 3.7 -46.2C5.4 -43.6 7.8 -37.8 9.9 -33.0C12.0 -28.2 14.8 -22.9 16.5 -17.6C18.1 -12.4 19.8 -1.5 19.8 -1.5C19.8 -1.5 -17.6 0.0 -17.6 0.0Z" fill="url(#gr)" stroke="#603a1c" stroke-width="1"/><path d="M-17.6 -0.4C-17.6 -0.4 -19.6 2.1 -20.5 4.4C-21.4 6.7 -22.3 9.9 -22.7 13.2C-23.1 16.5 -23.8 21.6 -23.1 24.2C-22.4 26.8 -23.1 27.4 -18.7 28.6C-14.3 29.8 -3.5 31.1 3.3 31.3C10.1 31.5 18.4 31.2 22.0 29.7C25.6 28.1 24.4 25.1 24.8 22.0C25.2 18.9 25.0 15.0 24.2 11.0C23.4 7.0 19.8 -2.2 19.8 -2.2C19.8 -2.2 13.1 -5.2 10.0 -6.0C6.9 -6.8 4.3 -7.2 1.1 -7.0C-2.1 -6.8 -5.9 -6.1 -9.0 -5.0C-12.1 -3.9 -17.6 -0.4 -17.6 -0.4Z" fill="url(#gc)" stroke="#7b7b7b" stroke-width=".9"/></g><g fill="none" stroke="#cf7f95" stroke-width="1.05"><ellipse cx="581.0" cy="428.7" rx="28.5" ry="18.1" fill="#fff"/><ellipse cx="581.0" cy="428.7" rx="14.5" ry="9.2"/><path d="M570.7 422.2L560.8 415.9"/><path d="M570.7 435.2L560.8 441.5"/><path d="M591.3 422.2L601.2 415.9"/><path d="M591.3 435.2L601.2 441.5"/></g><g transform="translate(656.5 372) scale(-1 1)"><path d="M-17.6 0.0C-17.6 0.0 -16.7 -8.1 -15.4 -13.2C-14.1 -18.3 -11.7 -25.3 -9.9 -30.8C-8.1 -36.3 -6.0 -43.3 -4.4 -46.2C-2.8 -49.1 -1.9 -48.4 -0.5 -48.4C0.9 -48.4 2.0 -48.8 3.7 -46.2C5.4 -43.6 7.8 -37.8 9.9 -33.0C12.0 -28.2 14.8 -22.9 16.5 -17.6C18.1 -12.4 19.8 -1.5 19.8 -1.5C19.8 -1.5 -17.6 0.0 -17.6 0.0Z" fill="url(#gr)" stroke="#603a1c" stroke-width="1"/><path d="M-17.6 -0.4C-17.6 -0.4 -19.6 2.1 -20.5 4.4C-21.4 6.7 -22.3 9.9 -22.7 13.2C-23.1 16.5 -23.8 21.6 -23.1 24.2C-22.4 26.8 -23.1 27.4 -18.7 28.6C-14.3 29.8 -3.5 31.1 3.3 31.3C10.1 31.5 18.4 31.2 22.0 29.7C25.6 28.1 24.4 25.1 24.8 22.0C25.2 18.9 25.0 15.0 24.2 11.0C23.4 7.0 19.8 -2.2 19.8 -2.2C19.8 -2.2 13.1 -5.2 10.0 -6.0C6.9 -6.8 4.3 -7.2 1.1 -7.0C-2.1 -6.8 -5.9 -6.1 -9.0 -5.0C-12.1 -3.9 -17.6 -0.4 -17.6 -0.4Z" fill="url(#gc)" stroke="#7b7b7b" stroke-width=".9"/></g><g fill="none" stroke="#cf7f95" stroke-width="1.05"><ellipse cx="656.5" cy="428.7" rx="28.5" ry="18.1" fill="#fff"/><ellipse cx="656.5" cy="428.7" rx="14.5" ry="9.2"/><path d="M646.2 422.2L636.3 415.9"/><path d="M646.2 435.2L636.3 441.5"/><path d="M666.8 422.2L676.7 415.9"/><path d="M666.8 435.2L676.7 441.5"/></g><g transform="translate(952.9 372) scale(-1 1)"><path d="M-8.8 1.0C-8.8 1.0 -8.2 -2.8 -7.7 -6.6C-7.2 -10.4 -6.2 -16.9 -5.5 -22.0C-4.8 -27.1 -3.9 -33.4 -3.3 -37.4C-2.7 -41.4 -2.6 -44.3 -1.7 -46.2C-0.8 -48.1 0.6 -48.6 2.2 -48.8C3.8 -49.0 6.2 -48.8 7.7 -47.3C9.2 -45.8 10.7 -43.1 11.5 -39.6C12.3 -36.1 12.2 -31.2 12.8 -26.4C13.4 -21.6 14.3 -15.6 15.0 -11.0C15.7 -6.4 16.7 1.0 16.7 1.0C16.7 1.0 -8.8 1.0 -8.8 1.0Z" fill="url(#gr)" stroke="#603a1c" stroke-width="1"/><path d="M-9.9 -1.1C-9.9 -1.1 -13.0 4.6 -14.3 7.7C-15.7 10.8 -17.6 15.0 -18.0 17.6C-18.4 20.2 -18.4 21.3 -16.5 23.1C-14.6 24.9 -10.1 27.3 -6.6 28.6C-3.1 29.9 0.0 31.2 4.4 30.8C8.8 30.4 16.4 27.8 19.8 26.0C23.2 24.2 24.3 22.3 24.7 19.8C25.1 17.3 23.2 14.2 22.0 11.0C20.8 7.8 17.2 0.5 17.2 0.5C17.2 0.5 12.5 -2.4 10.0 -3.2C7.5 -4.0 4.5 -4.4 2.2 -4.4C-0.1 -4.4 -2.0 -4.0 -4.0 -3.4C-6.0 -2.8 -9.9 -1.1 -9.9 -1.1Z" fill="url(#gc)" stroke="#6e6e6e" stroke-width=".8" stroke-dasharray="1.6 1.7"/></g><g fill="none" stroke="#7d7d7d" stroke-width="0.8" stroke-dasharray="1.6 1.7"><ellipse cx="952.9" cy="428.7" rx="28.5" ry="18.1" fill="#fff"/><ellipse cx="952.9" cy="428.7" rx="14.5" ry="9.2"/><path d="M942.6 422.2L932.7 415.9"/><path d="M942.6 435.2L932.7 441.5"/><path d="M963.2 422.2L973.1 415.9"/><path d="M963.2 435.2L973.1 441.5"/></g><g transform="translate(1027.0 372) scale(-1 1)"><path d="M-11.7 -38.0C-11.8 -39.9 -11.3 -41.8 -10.3 -43.5C-9.3 -45.2 -7.3 -47.8 -5.5 -48.3C-3.7 -48.8 -1.1 -47.5 0.7 -46.2C2.5 -44.9 4.3 -42.4 5.5 -40.7C6.7 -39.0 7.3 -38.3 7.8 -36.0C8.2 -33.7 8.5 -30.0 8.2 -27.0C7.9 -24.0 6.8 -20.8 6.0 -18.0C5.2 -15.2 4.6 -10.3 3.4 -10.0C2.2 -9.7 0.6 -13.7 -1.0 -16.0C-2.6 -18.3 -4.5 -21.3 -6.0 -24.0C-7.5 -26.7 -9.1 -29.7 -10.0 -32.0C-10.9 -34.3 -11.6 -36.1 -11.7 -38.0Z" fill="url(#gd)" stroke="#603a1c" stroke-width="1"/><path d="M-20.0 1.0C-20.0 1.0 -21.3 -9.9 -22.0 -14.6C-22.7 -19.3 -23.8 -23.3 -24.3 -27.0C-24.8 -30.7 -25.4 -33.9 -25.2 -36.6C-25.0 -39.4 -24.4 -42.0 -23.4 -43.5C-22.4 -45.0 -20.7 -45.7 -19.3 -45.8C-17.9 -45.9 -16.4 -45.6 -15.1 -44.2C-13.8 -42.8 -13.2 -40.9 -11.7 -37.3C-10.2 -33.7 -8.2 -26.9 -6.2 -22.8C-4.2 -18.7 -1.5 -14.7 0.0 -12.5C1.5 -10.3 2.8 -9.8 2.8 -9.8C2.8 -9.8 2.6 1.0 2.6 1.0C2.6 1.0 -20.0 1.0 -20.0 1.0Z" fill="url(#gr)" stroke="#603a1c" stroke-width="1"/><path d="M2.2 1.0C2.2 1.0 2.2 -4.1 2.4 -6.0C2.6 -7.9 2.9 -8.4 3.4 -10.5C3.9 -12.6 4.8 -15.9 5.5 -18.7C6.2 -21.4 6.9 -24.0 7.3 -27.0C7.7 -30.0 8.0 -33.9 7.8 -36.6C7.6 -39.4 6.1 -41.7 5.9 -43.5C5.8 -45.3 6.1 -46.4 6.9 -47.3C7.8 -48.2 9.4 -49.2 11.0 -49.0C12.6 -48.8 14.8 -48.0 16.5 -46.2C18.2 -44.4 20.1 -41.7 21.3 -38.0C22.6 -34.3 23.6 -28.1 24.0 -24.2C24.4 -20.3 24.6 -18.8 24.0 -14.6C23.4 -10.4 20.6 1.0 20.6 1.0C20.6 1.0 2.2 1.0 2.2 1.0Z" fill="url(#gr)" stroke="#603a1c" stroke-width="1"/><path d="M-19.5 0.0C-19.5 0.0 -23.1 5.1 -24.3 7.7C-25.6 10.3 -26.8 13.2 -27.0 15.4C-27.2 17.6 -26.9 19.1 -25.7 20.9C-24.4 22.7 -22.4 25.0 -19.5 26.0C-16.6 27.0 -11.6 27.2 -8.5 26.9C-5.4 26.6 -3.2 24.4 -0.8 24.3C1.6 24.2 3.4 25.9 5.8 26.5C8.2 27.1 10.8 28.2 13.5 27.8C16.2 27.4 19.8 25.8 22.3 23.9C24.8 22.0 27.9 19.1 28.5 16.6C29.1 14.1 27.0 11.6 25.6 8.9C24.2 6.2 20.1 0.5 20.1 0.5C20.1 0.5 13.3 1.8 10.0 1.8C6.7 1.8 3.3 0.6 0.0 0.6C-3.3 0.6 -6.8 1.7 -10.0 1.6C-13.2 1.5 -19.5 0.0 -19.5 0.0Z" fill="url(#gc)" stroke="#7b7b7b" stroke-width=".9"/></g><g fill="none" stroke="#cf7f95" stroke-width="1.05"><ellipse cx="1027.0" cy="428.7" rx="28.5" ry="18.1" fill="#fff"/><ellipse cx="1027.0" cy="428.7" rx="14.5" ry="9.2"/><path d="M1016.7 422.2L1006.8 415.9"/><path d="M1016.7 435.2L1006.8 441.5"/><path d="M1037.3 422.2L1047.2 415.9"/><path d="M1037.3 435.2L1047.2 441.5"/><path d="M1027.0 419.5V437.9"/></g><g transform="translate(1101.0 372) scale(-1 1)"><path d="M-11.7 -38.0C-11.8 -39.9 -11.3 -41.8 -10.3 -43.5C-9.3 -45.2 -7.3 -47.8 -5.5 -48.3C-3.7 -48.8 -1.1 -47.5 0.7 -46.2C2.5 -44.9 4.3 -42.4 5.5 -40.7C6.7 -39.0 7.3 -38.3 7.8 -36.0C8.2 -33.7 8.5 -30.0 8.2 -27.0C7.9 -24.0 6.8 -20.8 6.0 -18.0C5.2 -15.2 4.6 -10.3 3.4 -10.0C2.2 -9.7 0.6 -13.7 -1.0 -16.0C-2.6 -18.3 -4.5 -21.3 -6.0 -24.0C-7.5 -26.7 -9.1 -29.7 -10.0 -32.0C-10.9 -34.3 -11.6 -36.1 -11.7 -38.0Z" fill="url(#gd)" stroke="#603a1c" stroke-width="1"/><path d="M-20.0 1.0C-20.0 1.0 -21.3 -9.9 -22.0 -14.6C-22.7 -19.3 -23.8 -23.3 -24.3 -27.0C-24.8 -30.7 -25.4 -33.9 -25.2 -36.6C-25.0 -39.4 -24.4 -42.0 -23.4 -43.5C-22.4 -45.0 -20.7 -45.7 -19.3 -45.8C-17.9 -45.9 -16.4 -45.6 -15.1 -44.2C-13.8 -42.8 -13.2 -40.9 -11.7 -37.3C-10.2 -33.7 -8.2 -26.9 -6.2 -22.8C-4.2 -18.7 -1.5 -14.7 0.0 -12.5C1.5 -10.3 2.8 -9.8 2.8 -9.8C2.8 -9.8 2.6 1.0 2.6 1.0C2.6 1.0 -20.0 1.0 -20.0 1.0Z" fill="url(#gr)" stroke="#603a1c" stroke-width="1"/><path d="M2.2 1.0C2.2 1.0 2.2 -4.1 2.4 -6.0C2.6 -7.9 2.9 -8.4 3.4 -10.5C3.9 -12.6 4.8 -15.9 5.5 -18.7C6.2 -21.4 6.9 -24.0 7.3 -27.0C7.7 -30.0 8.0 -33.9 7.8 -36.6C7.6 -39.4 6.1 -41.7 5.9 -43.5C5.8 -45.3 6.1 -46.4 6.9 -47.3C7.8 -48.2 9.4 -49.2 11.0 -49.0C12.6 -48.8 14.8 -48.0 16.5 -46.2C18.2 -44.4 20.1 -41.7 21.3 -38.0C22.6 -34.3 23.6 -28.1 24.0 -24.2C24.4 -20.3 24.6 -18.8 24.0 -14.6C23.4 -10.4 20.6 1.0 20.6 1.0C20.6 1.0 2.2 1.0 2.2 1.0Z" fill="url(#gr)" stroke="#603a1c" stroke-width="1"/><path d="M-19.5 0.0C-19.5 0.0 -23.1 5.1 -24.3 7.7C-25.6 10.3 -26.8 13.2 -27.0 15.4C-27.2 17.6 -26.9 19.1 -25.7 20.9C-24.4 22.7 -22.4 25.0 -19.5 26.0C-16.6 27.0 -11.6 27.2 -8.5 26.9C-5.4 26.6 -3.2 24.4 -0.8 24.3C1.6 24.2 3.4 25.9 5.8 26.5C8.2 27.1 10.8 28.2 13.5 27.8C16.2 27.4 19.8 25.8 22.3 23.9C24.8 22.0 27.9 19.1 28.5 16.6C29.1 14.1 27.0 11.6 25.6 8.9C24.2 6.2 20.1 0.5 20.1 0.5C20.1 0.5 13.3 1.8 10.0 1.8C6.7 1.8 3.3 0.6 0.0 0.6C-3.3 0.6 -6.8 1.7 -10.0 1.6C-13.2 1.5 -19.5 0.0 -19.5 0.0Z" fill="url(#gc)" stroke="#7b7b7b" stroke-width=".9"/></g><g fill="none" stroke="#cf7f95" stroke-width="1.05"><ellipse cx="1101.0" cy="428.7" rx="28.5" ry="18.1" fill="#fff"/><ellipse cx="1101.0" cy="428.7" rx="14.5" ry="9.2"/><path d="M1090.7 422.2L1080.8 415.9"/><path d="M1090.7 435.2L1080.8 441.5"/><path d="M1111.3 422.2L1121.2 415.9"/><path d="M1111.3 435.2L1121.2 441.5"/><path d="M1101.0 419.5V437.9"/></g><g fill="none" stroke="#cf7f95" stroke-width="1.05"><ellipse cx="136.5" cy="496" rx="28.5" ry="18.1" fill="#fff"/><ellipse cx="136.5" cy="496" rx="14.5" ry="9.2"/><path d="M126.2 489.5L116.3 483.2"/><path d="M126.2 502.5L116.3 508.8"/><path d="M146.8 489.5L156.7 483.2"/><path d="M146.8 502.5L156.7 508.8"/><path d="M136.5 486.8V505.2"/></g><g transform="translate(136.5 558)"><path d="M-18.3 -1.0C-18.3 -1.0 -16.6 6.4 -17.2 11.0C-17.8 15.6 -19.8 21.8 -21.6 26.4C-23.4 31.0 -27.3 35.9 -28.2 38.5C-29.1 41.1 -28.0 41.2 -27.1 41.8C-26.2 42.3 -25.1 42.9 -22.7 41.8C-20.3 40.7 -15.7 38.5 -12.8 35.2C-9.9 31.9 -7.7 25.7 -5.1 22.0C-2.5 18.3 0.8 15.4 2.6 13.2C4.4 11.0 5.2 11.2 5.9 8.8C6.6 6.4 6.5 -1.0 6.5 -1.0C6.5 -1.0 -18.3 -1.0 -18.3 -1.0Z" fill="url(#gr)" stroke="#603a1c" stroke-width="1"/><path d="M5.3 -1.0C5.3 -1.0 5.8 6.1 6.6 8.8C7.4 11.5 9.0 12.5 10.3 15.4C11.7 18.3 14.3 23.1 14.7 26.4C15.1 29.7 12.5 32.5 12.5 35.2C12.5 38.0 13.6 41.5 14.7 42.9C15.8 44.3 17.1 44.5 19.1 43.6C21.1 42.7 24.9 40.3 26.8 37.4C28.8 34.5 30.4 30.4 30.8 26.4C31.2 22.4 30.0 17.8 29.0 13.2C28.0 8.6 24.6 -1.0 24.6 -1.0C24.6 -1.0 5.3 -1.0 5.3 -1.0Z" fill="url(#gr)" stroke="#603a1c" stroke-width="1"/><path d="M-28.2 -27.5C-26.3 -28.4 -22.7 -29.0 -19.4 -29.7C-16.1 -30.4 -11.3 -31.9 -8.4 -31.9C-5.5 -31.9 -4.2 -30.4 -1.8 -29.7C0.6 -29.0 3.7 -27.5 5.9 -27.5C8.1 -27.5 8.3 -29.4 11.4 -29.7C14.5 -29.9 21.3 -29.7 24.6 -29.0C27.9 -28.3 29.7 -27.2 31.2 -25.3C32.7 -23.4 33.6 -20.4 33.4 -17.6C33.2 -14.9 31.6 -11.7 30.1 -8.8C28.6 -5.9 24.6 -0.4 24.6 -0.4C24.6 -0.4 13.6 1.0 10.0 1.0C6.4 1.0 6.0 -0.3 3.0 -0.3C0.0 -0.3 -4.3 1.0 -8.0 1.0C-11.7 1.0 -19.4 -0.4 -19.4 -0.4C-19.4 -0.4 -23.1 -5.9 -24.9 -8.8C-26.7 -11.7 -29.4 -15.0 -30.4 -17.6C-31.4 -20.2 -31.2 -22.6 -30.8 -24.2C-30.4 -25.8 -30.1 -26.6 -28.2 -27.5Z" fill="url(#gc)" stroke="#7b7b7b" stroke-width=".9"/></g><g fill="none" stroke="#cf7f95" stroke-width="1.05"><ellipse cx="210.5" cy="496" rx="28.5" ry="18.1" fill="#fff"/><ellipse cx="210.5" cy="496" rx="14.5" ry="9.2"/><path d="M200.2 489.5L190.3 483.2"/><path d="M200.2 502.5L190.3 508.8"/><path d="M220.8 489.5L230.7 483.2"/><path d="M220.8 502.5L230.7 508.8"/><path d="M210.5 486.8V505.2"/></g><g transform="translate(210.5 558)"><path d="M-18.3 -1.0C-18.3 -1.0 -16.6 6.4 -17.2 11.0C-17.8 15.6 -19.8 21.8 -21.6 26.4C-23.4 31.0 -27.3 35.9 -28.2 38.5C-29.1 41.1 -28.0 41.2 -27.1 41.8C-26.2 42.3 -25.1 42.9 -22.7 41.8C-20.3 40.7 -15.7 38.5 -12.8 35.2C-9.9 31.9 -7.7 25.7 -5.1 22.0C-2.5 18.3 0.8 15.4 2.6 13.2C4.4 11.0 5.2 11.2 5.9 8.8C6.6 6.4 6.5 -1.0 6.5 -1.0C6.5 -1.0 -18.3 -1.0 -18.3 -1.0Z" fill="url(#gr)" stroke="#603a1c" stroke-width="1"/><path d="M5.3 -1.0C5.3 -1.0 5.8 6.1 6.6 8.8C7.4 11.5 9.0 12.5 10.3 15.4C11.7 18.3 14.3 23.1 14.7 26.4C15.1 29.7 12.5 32.5 12.5 35.2C12.5 38.0 13.6 41.5 14.7 42.9C15.8 44.3 17.1 44.5 19.1 43.6C21.1 42.7 24.9 40.3 26.8 37.4C28.8 34.5 30.4 30.4 30.8 26.4C31.2 22.4 30.0 17.8 29.0 13.2C28.0 8.6 24.6 -1.0 24.6 -1.0C24.6 -1.0 5.3 -1.0 5.3 -1.0Z" fill="url(#gr)" stroke="#603a1c" stroke-width="1"/><path d="M-28.2 -27.5C-26.3 -28.4 -22.7 -29.0 -19.4 -29.7C-16.1 -30.4 -11.3 -31.9 -8.4 -31.9C-5.5 -31.9 -4.2 -30.4 -1.8 -29.7C0.6 -29.0 3.7 -27.5 5.9 -27.5C8.1 -27.5 8.3 -29.4 11.4 -29.7C14.5 -29.9 21.3 -29.7 24.6 -29.0C27.9 -28.3 29.7 -27.2 31.2 -25.3C32.7 -23.4 33.6 -20.4 33.4 -17.6C33.2 -14.9 31.6 -11.7 30.1 -8.8C28.6 -5.9 24.6 -0.4 24.6 -0.4C24.6 -0.4 13.6 1.0 10.0 1.0C6.4 1.0 6.0 -0.3 3.0 -0.3C0.0 -0.3 -4.3 1.0 -8.0 1.0C-11.7 1.0 -19.4 -0.4 -19.4 -0.4C-19.4 -0.4 -23.1 -5.9 -24.9 -8.8C-26.7 -11.7 -29.4 -15.0 -30.4 -17.6C-31.4 -20.2 -31.2 -22.6 -30.8 -24.2C-30.4 -25.8 -30.1 -26.6 -28.2 -27.5Z" fill="url(#gc)" stroke="#7b7b7b" stroke-width=".9"/></g><g fill="none" stroke="#cf7f95" stroke-width="1.05"><ellipse cx="284.6" cy="496" rx="28.5" ry="18.1" fill="#fff"/><ellipse cx="284.6" cy="496" rx="14.5" ry="9.2"/><path d="M274.3 489.5L264.4 483.2"/><path d="M274.3 502.5L264.4 508.8"/><path d="M294.9 489.5L304.8 483.2"/><path d="M294.9 502.5L304.8 508.8"/></g><g transform="translate(284.6 558)"><path d="M-11.0 -1.0C-11.0 -1.0 -10.6 6.1 -9.9 11.0C-9.2 15.9 -7.5 23.5 -6.6 28.6C-5.7 33.7 -4.4 38.3 -4.4 41.8C-4.4 45.3 -6.6 47.7 -6.6 49.5C-6.6 51.3 -5.9 52.6 -4.4 52.4C-2.9 52.2 0.0 50.9 2.2 48.4C4.4 45.9 7.0 41.8 8.8 37.4C10.6 33.0 12.3 26.8 13.2 22.0C14.1 17.2 14.3 12.6 14.3 8.8C14.3 5.0 13.2 -1.0 13.2 -1.0C13.2 -1.0 -11.0 -1.0 -11.0 -1.0Z" fill="url(#gr)" stroke="#603a1c" stroke-width="1"/><path d="M-19.8 -22.0C-18.6 -23.6 -16.5 -25.2 -13.2 -26.4C-9.9 -27.6 -4.4 -29.1 0.0 -29.0C4.4 -28.9 9.6 -27.8 13.2 -25.9C16.8 -24.0 20.7 -20.5 21.6 -17.6C22.5 -14.8 20.1 -11.7 18.7 -8.8C17.3 -5.9 13.2 0.0 13.2 0.0C13.2 0.0 9.8 2.3 8.0 3.0C6.2 3.7 4.4 4.0 2.2 4.0C0.0 4.0 -2.8 3.7 -5.0 3.0C-7.2 2.3 -11.0 0.0 -11.0 0.0C-11.0 0.0 -15.0 -6.1 -16.5 -8.8C-18.0 -11.6 -19.6 -14.3 -20.2 -16.5C-20.8 -18.7 -21.0 -20.4 -19.8 -22.0Z" fill="url(#gc)" stroke="#7b7b7b" stroke-width=".9"/></g><g fill="none" stroke="#cf7f95" stroke-width="1.05"><ellipse cx="358.8" cy="496" rx="28.5" ry="18.1" fill="#fff"/><ellipse cx="358.8" cy="496" rx="14.5" ry="9.2"/><path d="M348.5 489.5L338.6 483.2"/><path d="M348.5 502.5L338.6 508.8"/><path d="M369.1 489.5L379.0 483.2"/><path d="M369.1 502.5L379.0 508.8"/></g><g transform="translate(358.8 558)"><path d="M-15.9 -1.0C-15.9 -1.0 -15.5 6.4 -14.8 11.0C-14.1 15.6 -12.4 21.6 -11.5 26.4C-10.6 31.2 -9.9 36.0 -9.3 39.6C-8.8 43.2 -9.3 46.9 -8.2 48.0C-7.1 49.1 -4.7 48.3 -2.7 46.2C-0.7 44.1 2.2 39.6 3.9 35.2C5.6 30.8 7.0 25.8 7.7 19.8C8.4 13.8 8.3 -1.0 8.3 -1.0C8.3 -1.0 -15.9 -1.0 -15.9 -1.0Z" fill="url(#gr)" stroke="#603a1c" stroke-width="1"/><path d="M-25.3 -17.6C-25.7 -20.0 -25.4 -21.8 -23.6 -23.1C-21.9 -24.4 -18.1 -24.4 -14.8 -25.3C-11.5 -26.2 -7.8 -28.6 -3.8 -28.6C0.2 -28.6 6.1 -27.1 9.4 -25.3C12.7 -23.5 15.1 -20.0 16.0 -17.6C16.9 -15.2 16.2 -13.9 14.9 -11.0C13.6 -8.1 8.3 0.0 8.3 0.0C8.3 0.0 5.0 2.3 3.0 3.0C1.0 3.7 -1.6 4.0 -3.8 4.0C-6.0 4.0 -8.0 3.7 -10.0 3.0C-12.0 2.3 -15.9 0.0 -15.9 0.0C-15.9 0.0 -19.8 -5.9 -21.4 -8.8C-23.0 -11.7 -24.9 -15.2 -25.3 -17.6Z" fill="url(#gc)" stroke="#7b7b7b" stroke-width=".9"/></g><g fill="none" stroke="#cf7f95" stroke-width="1.05"><ellipse cx="432.8" cy="496" rx="28.5" ry="18.1" fill="#fff"/><ellipse cx="432.8" cy="496" rx="14.5" ry="9.2"/><path d="M422.5 489.5L412.6 483.2"/><path d="M422.5 502.5L412.6 508.8"/><path d="M443.1 489.5L453.0 483.2"/><path d="M443.1 502.5L453.0 508.8"/></g><g transform="translate(432.8 558)"><path d="M-8.3 -1.0C-8.3 -1.0 -7.9 6.8 -8.3 11.0C-8.7 15.2 -10.5 20.2 -10.5 24.2C-10.5 28.2 -9.2 31.2 -8.3 35.2C-7.4 39.2 -6.1 45.6 -5.0 48.4C-3.9 51.1 -3.2 52.1 -1.7 51.7C-0.2 51.3 2.3 49.0 3.8 46.2C5.3 43.5 5.6 39.6 7.1 35.2C8.6 30.8 11.1 24.2 12.6 19.8C14.1 15.4 15.3 12.3 15.9 8.8C16.4 5.3 15.9 -1.0 15.9 -1.0C15.9 -1.0 -8.3 -1.0 -8.3 -1.0Z" fill="url(#gr)" stroke="#603a1c" stroke-width="1"/><path d="M3.8 -39.1C0.9 -38.9 -2.1 -36.8 -5.0 -35.2C-7.9 -33.6 -12.0 -31.7 -13.8 -29.7C-15.6 -27.7 -16.0 -25.9 -15.6 -23.1C-15.2 -20.4 -12.8 -17.1 -11.6 -13.2C-10.4 -9.3 -8.3 0.0 -8.3 0.0C-8.3 0.0 -4.0 2.7 -2.0 3.4C0.0 4.1 1.8 4.4 3.8 4.4C5.8 4.4 8.0 4.1 10.0 3.4C12.0 2.7 15.9 0.0 15.9 0.0C15.9 0.0 19.7 -2.9 20.9 -6.6C22.1 -10.3 23.0 -18.0 23.1 -22.0C23.2 -26.0 23.1 -28.4 21.4 -30.8C19.6 -33.2 15.5 -34.9 12.6 -36.3C9.7 -37.7 6.7 -39.3 3.8 -39.1Z" fill="url(#gc)" stroke="#7b7b7b" stroke-width=".9"/></g><g fill="none" stroke="#cf7f95" stroke-width="1.05"><ellipse cx="506.8" cy="496" rx="28.5" ry="18.1" fill="#fff"/><ellipse cx="506.8" cy="496" rx="14.5" ry="9.2"/><path d="M496.5 489.5L486.6 483.2"/><path d="M496.5 502.5L486.6 508.8"/><path d="M517.1 489.5L527.0 483.2"/><path d="M517.1 502.5L527.0 508.8"/></g><g transform="translate(506.8 558)"><path d="M-8.8 -1.0C-8.8 -1.0 -8.8 9.4 -8.4 15.4C-8.0 21.4 -7.3 29.5 -6.6 35.2C-5.9 40.9 -5.1 46.8 -4.4 49.5C-3.7 52.2 -3.3 52.2 -2.2 51.7C-1.1 51.2 0.9 49.3 2.2 46.2C3.5 43.1 4.6 38.1 5.5 33.0C6.4 27.9 7.2 21.1 7.7 15.4C8.2 9.7 8.4 -1.0 8.4 -1.0C8.4 -1.0 -8.8 -1.0 -8.8 -1.0Z" fill="url(#gr)" stroke="#603a1c" stroke-width="1"/><path d="M-14.3 -33.0C-13.6 -33.5 -13.4 -33.8 -11.0 -34.0C-8.6 -34.2 -3.7 -34.4 0.0 -34.4C3.7 -34.4 8.5 -34.4 11.0 -34.0C13.5 -33.6 14.4 -33.9 15.0 -31.9C15.6 -29.9 15.0 -25.9 14.3 -22.0C13.6 -18.1 12.0 -12.5 11.0 -8.8C10.0 -5.1 8.4 0.0 8.4 0.0C8.4 0.0 5.4 1.4 4.0 1.8C2.6 2.2 1.4 2.2 0.0 2.2C-1.4 2.2 -3.0 2.2 -4.5 1.8C-6.0 1.4 -8.8 0.0 -8.8 0.0C-8.8 0.0 -12.1 -7.0 -13.2 -11.0C-14.3 -15.0 -15.0 -20.9 -15.4 -24.2C-15.8 -27.5 -15.6 -29.3 -15.4 -30.8C-15.2 -32.3 -15.0 -32.5 -14.3 -33.0Z" fill="url(#gc)" stroke="#7b7b7b" stroke-width=".9"/></g><g fill="none" stroke="#cf7f95" stroke-width="1.05"><ellipse cx="581.0" cy="496" rx="28.5" ry="18.1" fill="#fff"/><ellipse cx="581.0" cy="496" rx="14.5" ry="9.2"/><path d="M570.7 489.5L560.8 483.2"/><path d="M570.7 502.5L560.8 508.8"/><path d="M591.3 489.5L601.2 483.2"/><path d="M591.3 502.5L601.2 508.8"/></g><g transform="translate(581.0 558)"><path d="M-7.7 -1.0C-7.7 -1.0 -8.0 9.4 -7.9 15.4C-7.8 21.4 -7.6 29.7 -7.3 35.2C-7.0 40.7 -6.8 45.6 -6.2 48.4C-5.6 51.2 -4.8 52.4 -3.5 52.0C-2.2 51.6 0.1 49.4 1.5 46.2C2.9 43.0 3.9 38.1 4.8 33.0C5.6 27.9 6.3 21.1 6.6 15.4C6.9 9.7 6.6 -1.0 6.6 -1.0C6.6 -1.0 -7.7 -1.0 -7.7 -1.0Z" fill="url(#gr)" stroke="#603a1c" stroke-width="1"/><path d="M-14.5 -31.9C-14.0 -33.5 -13.9 -33.6 -11.7 -34.0C-9.4 -34.4 -4.5 -34.4 -1.0 -34.4C2.5 -34.4 7.0 -34.4 9.2 -34.0C11.3 -33.6 11.6 -33.9 11.9 -31.9C12.2 -29.9 11.6 -25.9 11.0 -22.0C10.4 -18.1 8.8 -12.5 8.1 -8.8C7.4 -5.1 6.6 0.0 6.6 0.0C6.6 0.0 4.2 1.4 3.0 1.8C1.8 2.2 0.6 2.2 -0.7 2.2C-1.9 2.2 -3.3 2.2 -4.5 1.8C-5.7 1.4 -7.7 0.0 -7.7 0.0C-7.7 0.0 -10.6 -7.0 -11.7 -11.0C-12.8 -15.0 -14.0 -20.7 -14.5 -24.2C-15.0 -27.7 -15.0 -30.3 -14.5 -31.9Z" fill="url(#gc)" stroke="#7b7b7b" stroke-width=".9"/></g><g fill="none" stroke="#cf7f95" stroke-width="1.05"><ellipse cx="656.5" cy="496" rx="28.5" ry="18.1" fill="#fff"/><ellipse cx="656.5" cy="496" rx="14.5" ry="9.2"/><path d="M646.2 489.5L636.3 483.2"/><path d="M646.2 502.5L636.3 508.8"/><path d="M666.8 489.5L676.7 483.2"/><path d="M666.8 502.5L676.7 508.8"/></g><g transform="translate(656.5 558) scale(-1 1)"><path d="M-7.7 -1.0C-7.7 -1.0 -8.0 9.4 -7.9 15.4C-7.8 21.4 -7.6 29.7 -7.3 35.2C-7.0 40.7 -6.8 45.6 -6.2 48.4C-5.6 51.2 -4.8 52.4 -3.5 52.0C-2.2 51.6 0.1 49.4 1.5 46.2C2.9 43.0 3.9 38.1 4.8 33.0C5.6 27.9 6.3 21.1 6.6 15.4C6.9 9.7 6.6 -1.0 6.6 -1.0C6.6 -1.0 -7.7 -1.0 -7.7 -1.0Z" fill="url(#gr)" stroke="#603a1c" stroke-width="1"/><path d="M-14.5 -31.9C-14.0 -33.5 -13.9 -33.6 -11.7 -34.0C-9.4 -34.4 -4.5 -34.4 -1.0 -34.4C2.5 -34.4 7.0 -34.4 9.2 -34.0C11.3 -33.6 11.6 -33.9 11.9 -31.9C12.2 -29.9 11.6 -25.9 11.0 -22.0C10.4 -18.1 8.8 -12.5 8.1 -8.8C7.4 -5.1 6.6 0.0 6.6 0.0C6.6 0.0 4.2 1.4 3.0 1.8C1.8 2.2 0.6 2.2 -0.7 2.2C-1.9 2.2 -3.3 2.2 -4.5 1.8C-5.7 1.4 -7.7 0.0 -7.7 0.0C-7.7 0.0 -10.6 -7.0 -11.7 -11.0C-12.8 -15.0 -14.0 -20.7 -14.5 -24.2C-15.0 -27.7 -15.0 -30.3 -14.5 -31.9Z" fill="url(#gc)" stroke="#7b7b7b" stroke-width=".9"/></g><g fill="none" stroke="#cf7f95" stroke-width="1.05"><ellipse cx="730.7" cy="496" rx="28.5" ry="18.1" fill="#fff"/><ellipse cx="730.7" cy="496" rx="14.5" ry="9.2"/><path d="M720.4 489.5L710.5 483.2"/><path d="M720.4 502.5L710.5 508.8"/><path d="M741.0 489.5L750.9 483.2"/><path d="M741.0 502.5L750.9 508.8"/></g><g transform="translate(730.7 558) scale(-1 1)"><path d="M-8.8 -1.0C-8.8 -1.0 -8.8 9.4 -8.4 15.4C-8.0 21.4 -7.3 29.5 -6.6 35.2C-5.9 40.9 -5.1 46.8 -4.4 49.5C-3.7 52.2 -3.3 52.2 -2.2 51.7C-1.1 51.2 0.9 49.3 2.2 46.2C3.5 43.1 4.6 38.1 5.5 33.0C6.4 27.9 7.2 21.1 7.7 15.4C8.2 9.7 8.4 -1.0 8.4 -1.0C8.4 -1.0 -8.8 -1.0 -8.8 -1.0Z" fill="url(#gr)" stroke="#603a1c" stroke-width="1"/><path d="M-14.3 -33.0C-13.6 -33.5 -13.4 -33.8 -11.0 -34.0C-8.6 -34.2 -3.7 -34.4 0.0 -34.4C3.7 -34.4 8.5 -34.4 11.0 -34.0C13.5 -33.6 14.4 -33.9 15.0 -31.9C15.6 -29.9 15.0 -25.9 14.3 -22.0C13.6 -18.1 12.0 -12.5 11.0 -8.8C10.0 -5.1 8.4 0.0 8.4 0.0C8.4 0.0 5.4 1.4 4.0 1.8C2.6 2.2 1.4 2.2 0.0 2.2C-1.4 2.2 -3.0 2.2 -4.5 1.8C-6.0 1.4 -8.8 0.0 -8.8 0.0C-8.8 0.0 -12.1 -7.0 -13.2 -11.0C-14.3 -15.0 -15.0 -20.9 -15.4 -24.2C-15.8 -27.5 -15.6 -29.3 -15.4 -30.8C-15.2 -32.3 -15.0 -32.5 -14.3 -33.0Z" fill="url(#gc)" stroke="#7b7b7b" stroke-width=".9"/></g><g fill="none" stroke="#cf7f95" stroke-width="1.05"><ellipse cx="804.7" cy="496" rx="28.5" ry="18.1" fill="#fff"/><ellipse cx="804.7" cy="496" rx="14.5" ry="9.2"/><path d="M794.4 489.5L784.5 483.2"/><path d="M794.4 502.5L784.5 508.8"/><path d="M815.0 489.5L824.9 483.2"/><path d="M815.0 502.5L824.9 508.8"/></g><g transform="translate(804.7 558) scale(-1 1)"><path d="M-8.3 -1.0C-8.3 -1.0 -7.9 6.8 -8.3 11.0C-8.7 15.2 -10.5 20.2 -10.5 24.2C-10.5 28.2 -9.2 31.2 -8.3 35.2C-7.4 39.2 -6.1 45.6 -5.0 48.4C-3.9 51.1 -3.2 52.1 -1.7 51.7C-0.2 51.3 2.3 49.0 3.8 46.2C5.3 43.5 5.6 39.6 7.1 35.2C8.6 30.8 11.1 24.2 12.6 19.8C14.1 15.4 15.3 12.3 15.9 8.8C16.4 5.3 15.9 -1.0 15.9 -1.0C15.9 -1.0 -8.3 -1.0 -8.3 -1.0Z" fill="url(#gr)" stroke="#603a1c" stroke-width="1"/><path d="M3.8 -39.1C0.9 -38.9 -2.1 -36.8 -5.0 -35.2C-7.9 -33.6 -12.0 -31.7 -13.8 -29.7C-15.6 -27.7 -16.0 -25.9 -15.6 -23.1C-15.2 -20.4 -12.8 -17.1 -11.6 -13.2C-10.4 -9.3 -8.3 0.0 -8.3 0.0C-8.3 0.0 -4.0 2.7 -2.0 3.4C0.0 4.1 1.8 4.4 3.8 4.4C5.8 4.4 8.0 4.1 10.0 3.4C12.0 2.7 15.9 0.0 15.9 0.0C15.9 0.0 19.7 -2.9 20.9 -6.6C22.1 -10.3 23.0 -18.0 23.1 -22.0C23.2 -26.0 23.1 -28.4 21.4 -30.8C19.6 -33.2 15.5 -34.9 12.6 -36.3C9.7 -37.7 6.7 -39.3 3.8 -39.1Z" fill="url(#gc)" stroke="#7b7b7b" stroke-width=".9"/></g><g fill="none" stroke="#cf7f95" stroke-width="1.05"><ellipse cx="878.7" cy="496" rx="28.5" ry="18.1" fill="#fff"/><ellipse cx="878.7" cy="496" rx="14.5" ry="9.2"/><path d="M868.4 489.5L858.5 483.2"/><path d="M868.4 502.5L858.5 508.8"/><path d="M889.0 489.5L898.9 483.2"/><path d="M889.0 502.5L898.9 508.8"/></g><g transform="translate(878.7 558) scale(-1 1)"><path d="M-15.9 -1.0C-15.9 -1.0 -15.5 6.4 -14.8 11.0C-14.1 15.6 -12.4 21.6 -11.5 26.4C-10.6 31.2 -9.9 36.0 -9.3 39.6C-8.8 43.2 -9.3 46.9 -8.2 48.0C-7.1 49.1 -4.7 48.3 -2.7 46.2C-0.7 44.1 2.2 39.6 3.9 35.2C5.6 30.8 7.0 25.8 7.7 19.8C8.4 13.8 8.3 -1.0 8.3 -1.0C8.3 -1.0 -15.9 -1.0 -15.9 -1.0Z" fill="url(#gr)" stroke="#603a1c" stroke-width="1"/><path d="M-25.3 -17.6C-25.7 -20.0 -25.4 -21.8 -23.6 -23.1C-21.9 -24.4 -18.1 -24.4 -14.8 -25.3C-11.5 -26.2 -7.8 -28.6 -3.8 -28.6C0.2 -28.6 6.1 -27.1 9.4 -25.3C12.7 -23.5 15.1 -20.0 16.0 -17.6C16.9 -15.2 16.2 -13.9 14.9 -11.0C13.6 -8.1 8.3 0.0 8.3 0.0C8.3 0.0 5.0 2.3 3.0 3.0C1.0 3.7 -1.6 4.0 -3.8 4.0C-6.0 4.0 -8.0 3.7 -10.0 3.0C-12.0 2.3 -15.9 0.0 -15.9 0.0C-15.9 0.0 -19.8 -5.9 -21.4 -8.8C-23.0 -11.7 -24.9 -15.2 -25.3 -17.6Z" fill="url(#gc)" stroke="#7b7b7b" stroke-width=".9"/></g><g fill="none" stroke="#cf7f95" stroke-width="1.05"><ellipse cx="952.9" cy="496" rx="28.5" ry="18.1" fill="#fff"/><ellipse cx="952.9" cy="496" rx="14.5" ry="9.2"/><path d="M942.6 489.5L932.7 483.2"/><path d="M942.6 502.5L932.7 508.8"/><path d="M963.2 489.5L973.1 483.2"/><path d="M963.2 502.5L973.1 508.8"/></g><g transform="translate(952.9 558) scale(-1 1)"><path d="M-11.0 -1.0C-11.0 -1.0 -10.6 6.1 -9.9 11.0C-9.2 15.9 -7.5 23.5 -6.6 28.6C-5.7 33.7 -4.4 38.3 -4.4 41.8C-4.4 45.3 -6.6 47.7 -6.6 49.5C-6.6 51.3 -5.9 52.6 -4.4 52.4C-2.9 52.2 0.0 50.9 2.2 48.4C4.4 45.9 7.0 41.8 8.8 37.4C10.6 33.0 12.3 26.8 13.2 22.0C14.1 17.2 14.3 12.6 14.3 8.8C14.3 5.0 13.2 -1.0 13.2 -1.0C13.2 -1.0 -11.0 -1.0 -11.0 -1.0Z" fill="url(#gr)" stroke="#603a1c" stroke-width="1"/><path d="M-19.8 -22.0C-18.6 -23.6 -16.5 -25.2 -13.2 -26.4C-9.9 -27.6 -4.4 -29.1 0.0 -29.0C4.4 -28.9 9.6 -27.8 13.2 -25.9C16.8 -24.0 20.7 -20.5 21.6 -17.6C22.5 -14.8 20.1 -11.7 18.7 -8.8C17.3 -5.9 13.2 0.0 13.2 0.0C13.2 0.0 9.8 2.3 8.0 3.0C6.2 3.7 4.4 4.0 2.2 4.0C0.0 4.0 -2.8 3.7 -5.0 3.0C-7.2 2.3 -11.0 0.0 -11.0 0.0C-11.0 0.0 -15.0 -6.1 -16.5 -8.8C-18.0 -11.6 -19.6 -14.3 -20.2 -16.5C-20.8 -18.7 -21.0 -20.4 -19.8 -22.0Z" fill="url(#gc)" stroke="#7b7b7b" stroke-width=".9"/></g><g fill="none" stroke="#cf7f95" stroke-width="1.05"><ellipse cx="1027.0" cy="496" rx="28.5" ry="18.1" fill="#fff"/><ellipse cx="1027.0" cy="496" rx="14.5" ry="9.2"/><path d="M1016.7 489.5L1006.8 483.2"/><path d="M1016.7 502.5L1006.8 508.8"/><path d="M1037.3 489.5L1047.2 483.2"/><path d="M1037.3 502.5L1047.2 508.8"/><path d="M1027.0 486.8V505.2"/></g><g transform="translate(1027.0 558) scale(-1 1)"><path d="M-18.3 -1.0C-18.3 -1.0 -16.6 6.4 -17.2 11.0C-17.8 15.6 -19.8 21.8 -21.6 26.4C-23.4 31.0 -27.3 35.9 -28.2 38.5C-29.1 41.1 -28.0 41.2 -27.1 41.8C-26.2 42.3 -25.1 42.9 -22.7 41.8C-20.3 40.7 -15.7 38.5 -12.8 35.2C-9.9 31.9 -7.7 25.7 -5.1 22.0C-2.5 18.3 0.8 15.4 2.6 13.2C4.4 11.0 5.2 11.2 5.9 8.8C6.6 6.4 6.5 -1.0 6.5 -1.0C6.5 -1.0 -18.3 -1.0 -18.3 -1.0Z" fill="url(#gr)" stroke="#603a1c" stroke-width="1"/><path d="M5.3 -1.0C5.3 -1.0 5.8 6.1 6.6 8.8C7.4 11.5 9.0 12.5 10.3 15.4C11.7 18.3 14.3 23.1 14.7 26.4C15.1 29.7 12.5 32.5 12.5 35.2C12.5 38.0 13.6 41.5 14.7 42.9C15.8 44.3 17.1 44.5 19.1 43.6C21.1 42.7 24.9 40.3 26.8 37.4C28.8 34.5 30.4 30.4 30.8 26.4C31.2 22.4 30.0 17.8 29.0 13.2C28.0 8.6 24.6 -1.0 24.6 -1.0C24.6 -1.0 5.3 -1.0 5.3 -1.0Z" fill="url(#gr)" stroke="#603a1c" stroke-width="1"/><path d="M-28.2 -27.5C-26.3 -28.4 -22.7 -29.0 -19.4 -29.7C-16.1 -30.4 -11.3 -31.9 -8.4 -31.9C-5.5 -31.9 -4.2 -30.4 -1.8 -29.7C0.6 -29.0 3.7 -27.5 5.9 -27.5C8.1 -27.5 8.3 -29.4 11.4 -29.7C14.5 -29.9 21.3 -29.7 24.6 -29.0C27.9 -28.3 29.7 -27.2 31.2 -25.3C32.7 -23.4 33.6 -20.4 33.4 -17.6C33.2 -14.9 31.6 -11.7 30.1 -8.8C28.6 -5.9 24.6 -0.4 24.6 -0.4C24.6 -0.4 13.6 1.0 10.0 1.0C6.4 1.0 6.0 -0.3 3.0 -0.3C0.0 -0.3 -4.3 1.0 -8.0 1.0C-11.7 1.0 -19.4 -0.4 -19.4 -0.4C-19.4 -0.4 -23.1 -5.9 -24.9 -8.8C-26.7 -11.7 -29.4 -15.0 -30.4 -17.6C-31.4 -20.2 -31.2 -22.6 -30.8 -24.2C-30.4 -25.8 -30.1 -26.6 -28.2 -27.5Z" fill="url(#gc)" stroke="#7b7b7b" stroke-width=".9"/></g><g fill="none" stroke="#cf7f95" stroke-width="1.05"><ellipse cx="1101.0" cy="496" rx="28.5" ry="18.1" fill="#fff"/><ellipse cx="1101.0" cy="496" rx="14.5" ry="9.2"/><path d="M1090.7 489.5L1080.8 483.2"/><path d="M1090.7 502.5L1080.8 508.8"/><path d="M1111.3 489.5L1121.2 483.2"/><path d="M1111.3 502.5L1121.2 508.8"/><path d="M1101.0 486.8V505.2"/></g><g transform="translate(1101.0 558) scale(-1 1)"><path d="M-18.3 -1.0C-18.3 -1.0 -16.6 6.4 -17.2 11.0C-17.8 15.6 -19.8 21.8 -21.6 26.4C-23.4 31.0 -27.3 35.9 -28.2 38.5C-29.1 41.1 -28.0 41.2 -27.1 41.8C-26.2 42.3 -25.1 42.9 -22.7 41.8C-20.3 40.7 -15.7 38.5 -12.8 35.2C-9.9 31.9 -7.7 25.7 -5.1 22.0C-2.5 18.3 0.8 15.4 2.6 13.2C4.4 11.0 5.2 11.2 5.9 8.8C6.6 6.4 6.5 -1.0 6.5 -1.0C6.5 -1.0 -18.3 -1.0 -18.3 -1.0Z" fill="url(#gr)" stroke="#603a1c" stroke-width="1"/><path d="M5.3 -1.0C5.3 -1.0 5.8 6.1 6.6 8.8C7.4 11.5 9.0 12.5 10.3 15.4C11.7 18.3 14.3 23.1 14.7 26.4C15.1 29.7 12.5 32.5 12.5 35.2C12.5 38.0 13.6 41.5 14.7 42.9C15.8 44.3 17.1 44.5 19.1 43.6C21.1 42.7 24.9 40.3 26.8 37.4C28.8 34.5 30.4 30.4 30.8 26.4C31.2 22.4 30.0 17.8 29.0 13.2C28.0 8.6 24.6 -1.0 24.6 -1.0C24.6 -1.0 5.3 -1.0 5.3 -1.0Z" fill="url(#gr)" stroke="#603a1c" stroke-width="1"/><path d="M-28.2 -27.5C-26.3 -28.4 -22.7 -29.0 -19.4 -29.7C-16.1 -30.4 -11.3 -31.9 -8.4 -31.9C-5.5 -31.9 -4.2 -30.4 -1.8 -29.7C0.6 -29.0 3.7 -27.5 5.9 -27.5C8.1 -27.5 8.3 -29.4 11.4 -29.7C14.5 -29.9 21.3 -29.7 24.6 -29.0C27.9 -28.3 29.7 -27.2 31.2 -25.3C32.7 -23.4 33.6 -20.4 33.4 -17.6C33.2 -14.9 31.6 -11.7 30.1 -8.8C28.6 -5.9 24.6 -0.4 24.6 -0.4C24.6 -0.4 13.6 1.0 10.0 1.0C6.4 1.0 6.0 -0.3 3.0 -0.3C0.0 -0.3 -4.3 1.0 -8.0 1.0C-11.7 1.0 -19.4 -0.4 -19.4 -0.4C-19.4 -0.4 -23.1 -5.9 -24.9 -8.8C-26.7 -11.7 -29.4 -15.0 -30.4 -17.6C-31.4 -20.2 -31.2 -22.6 -30.8 -24.2C-30.4 -25.8 -30.1 -26.6 -28.2 -27.5Z" fill="url(#gc)" stroke="#7b7b7b" stroke-width=".9"/></g></svg>
<div class="a" style="left:617.4px;top:277px;width:2.80px;height:342.50px;background:#1d8a22;"></div>
<div class="a" style="left:1241px;top:277px;width:293.00px;height:445.30px;background:#696969;border:1px solid #222;border-right-color:#555;box-sizing:border-box;"></div>
<div class="a" style="left:1332px;top:278px;width:199.00px;height:23.00px;background:#f7f7f7;"></div>
<div class="a" style="left:1332px;top:278px;width:4.00px;height:23.00px;background:;background:linear-gradient(90deg,#8a8a8a,#f7f7f7);"></div>
<div class="a" style="left:1424.5px;top:278px;width:3.00px;height:23.00px;background:;background:linear-gradient(90deg,#f7f7f7,#c8c8c8,#f7f7f7);"></div>
<div class="a" style="left:1517.5px;top:278px;width:13.00px;height:23.00px;background:;background:linear-gradient(90deg,#b5b5b5,#d8d8d8);"></div>
<div class="a" style="left:1332px;top:300.3px;width:199.00px;height:1.00px;background:#fdfdfd;"></div>
<span class="t" style="left:1265.50px;top:286.00px;font-size:9.2px;color:#fff;letter-spacing:-0.411px;">Pre-existing</span>
<span class="t" style="left:1360.00px;top:286.00px;font-size:9.2px;color:#111;letter-spacing:-0.555px;">Completed</span>
<span class="t" style="left:1458.00px;top:286.00px;font-size:9.2px;color:#111;letter-spacing:-0.617px;">TxPlans</span>
<div class="a" style="left:1250.5px;top:309px;width:130.50px;height:24.00px;background:#fff;border-radius:4px;"></div>
<span class="t" style="left:1307.03px;top:317.00px;font-size:9.5px;color:#a3a3a3;letter-spacing:0.000px;">Decay</span>
<svg class="a" style="left:1260.5px;top:315.8px" width="13" height="12" viewBox="0 0 26 24"><path d="M6 2 c3-2 5 0 7 0 s4-2 7 0 c3.500 2.500 2 8 1 11 c-1 4-1.500 9-3 9 s-2-7-5-7 s-3.500 7-5 7 s-2-5-3-9 c-1-3-2.500-8.500 1-11z" fill="#a9a9a9"/></svg>
<svg class="a" style="left:1260.5px;top:315.8px" width="13" height="12" viewBox="0 0 26 24"><circle cx="8" cy="7" r="3" fill="#d9d9d9"/></svg>
<div class="a" style="left:1395.5px;top:309px;width:131.50px;height:24.00px;background:#fff;border-radius:4px;"></div>
<span class="t" style="left:1446.70px;top:317.00px;font-size:9.5px;color:#a3a3a3;letter-spacing:0.000px;">Defective</span>
<svg class="a" style="left:1405.5px;top:315.8px" width="13" height="12" viewBox="0 0 26 24"><path d="M6 2 c3-2 5 0 7 0 s4-2 7 0 c3.500 2.500 2 8 1 11 c-1 4-1.500 9-3 9 s-2-7-5-7 s-3.500 7-5 7 s-2-5-3-9 c-1-3-2.500-8.500 1-11z" fill="#a9a9a9"/></svg>
<svg class="a" style="left:1405.5px;top:315.8px" width="13" height="12" viewBox="0 0 26 24"><circle cx="17" cy="7" r="3" fill="#d9d9d9"/></svg>
<div class="a" style="left:1250.5px;top:348px;width:130.50px;height:24.00px;background:#fff;border-radius:4px;"></div>
<span class="t" style="left:1296.20px;top:356.00px;font-size:9.5px;color:#a3a3a3;letter-spacing:0.000px;">Restoration</span>
<svg class="a" style="left:1260.5px;top:354.8px" width="13" height="12" viewBox="0 0 26 24"><path d="M6 2 c3-2 5 0 7 0 s4-2 7 0 c3.500 2.500 2 8 1 11 c-1 4-1.500 9-3 9 s-2-7-5-7 s-3.500 7-5 7 s-2-5-3-9 c-1-3-2.500-8.500 1-11z" fill="#a9a9a9"/></svg>
<svg class="a" style="left:1260.5px;top:354.8px" width="13" height="12" viewBox="0 0 26 24"><circle cx="8" cy="7" r="3" fill="#d9d9d9"/></svg>
<div class="a" style="left:1395.5px;top:348px;width:131.50px;height:24.00px;background:#fff;border-radius:4px;"></div>
<span class="t" style="left:1452.77px;top:356.00px;font-size:9.5px;color:#a3a3a3;letter-spacing:0.000px;">Bridge</span>
<svg class="a" style="left:1405.5px;top:354.8px" width="13" height="12" viewBox="0 0 26 24"><path d="M6 2 c3-2 5 0 7 0 s4-2 7 0 c3.500 2.500 2 8 1 11 c-1 4-1.500 9-3 9 s-2-7-5-7 s-3.500 7-5 7 s-2-5-3-9 c-1-3-2.500-8.500 1-11z" fill="#a9a9a9"/></svg>
<div class="a" style="left:1250.5px;top:387px;width:130.50px;height:24.00px;background:#fff;border-radius:4px;"></div>
<span class="t" style="left:1304.92px;top:395.00px;font-size:9.5px;color:#a3a3a3;letter-spacing:0.000px;">Implant</span>
<svg class="a" style="left:1262.0px;top:392.0px" width="10" height="15" viewBox="0 0 20 30"><path d="M3 1 c2-1.500 4 0 7 0 s5-1.500 7 0 c2.500 2 2 7 0 10 h-14 c-2-3-2.500-8 0-10z M7 12 h6 v3 h-6z M6 16 h8 v2.500 h-8z M7 19.500 h6 v2.500 h-6z M8 23 h4 l-2 6z" fill="#a9a9a9"/></svg>
<div class="a" style="left:1395.5px;top:387px;width:131.50px;height:24.00px;background:#fff;border-radius:4px;"></div>
<span class="t" style="left:1449.59px;top:395.00px;font-size:9.5px;color:#a3a3a3;letter-spacing:0.000px;">Denture</span>
<svg class="a" style="left:1406.0px;top:393px" width="13" height="12.500" viewBox="0 0 26 25"><ellipse cx="13" cy="12.500" rx="13" ry="12" fill="#a9a9a9"/><path d="M3 12.500 h20 M7.500 6.500 v12 M13 5.500 v14 M18.500 6.500 v12" stroke="#fff" stroke-width="1.600"/><path d="M3 8 q10-5 20 0 M3 17 q10 5 20 0" stroke="#fff" stroke-width="1.300" fill="none"/></svg>
<div class="a" style="left:1250.5px;top:426px;width:130.50px;height:24.00px;background:#fff;border-radius:4px;"></div>
<span class="t" style="left:1304.40px;top:434.00px;font-size:9.5px;color:#a3a3a3;letter-spacing:0.000px;">Missing</span>
<svg class="a" style="left:1256.0px;top:430.5px" width="22" height="15" viewBox="0 0 44 30"><path d="M2 12 c2-1.500 4 0 6 0 s4-1.500 6 0 c1.500 2 .5 9 0 13 h-12 c-.5-4-1.500-11 0-13z M30 12 c2-1.500 4 0 6 0 s4-1.500 6 0 c1.500 2 .5 9 0 13 h-12 c-.5-4-1.500-11 0-13z M0 26 h44 v3 h-44z" fill="#a9a9a9"/><text x="22" y="15" text-anchor="middle" font-family="Liberation Sans" font-size="17" fill="#a9a9a9">?</text></svg>
<div class="a" style="left:1395.5px;top:426px;width:131.50px;height:24.00px;background:#fff;border-radius:4px;"></div>
<span class="t" style="left:1446.96px;top:434.00px;font-size:9.5px;color:#a3a3a3;letter-spacing:0.000px;">Impacted</span>
<svg class="a" style="left:1402.0px;top:431.8px" width="21" height="13" viewBox="0 0 42 26" overflow="visible"><g transform="translate(0 2) scale(.74 1)"><path d="M6 2 c3-2 5 0 7 0 s4-2 7 0 c3.500 2.500 2 8 1 11 c-1 4-1.500 9-3 9 s-2-7-5-7 s-3.500 7-5 7 s-2-5-3-9 c-1-3-2.500-8.500 1-11z" fill="#a9a9a9"/></g><g transform="translate(30 13) rotate(-50) scale(.74 .95) translate(-13 -12)"><path d="M6 2 c3-2 5 0 7 0 s4-2 7 0 c3.500 2.500 2 8 1 11 c-1 4-1.500 9-3 9 s-2-7-5-7 s-3.500 7-5 7 s-2-5-3-9 c-1-3-2.500-8.500 1-11z" fill="#a9a9a9"/></g></svg>
<div class="a" style="left:1250.5px;top:465px;width:130.50px;height:24.00px;background:#fff;border-radius:4px;"></div>
<span class="t" style="left:1303.86px;top:473.00px;font-size:9.5px;color:#a3a3a3;letter-spacing:0.000px;">Erupted</span>
<svg class="a" style="left:1260.5px;top:471.8px" width="13" height="12" viewBox="0 0 26 24"><path d="M6 2 c3-2 5 0 7 0 s4-2 7 0 c3.500 2.500 2 8 1 11 c-1 4-1.500 9-3 9 s-2-7-5-7 s-3.500 7-5 7 s-2-5-3-9 c-1-3-2.500-8.500 1-11z" fill="#a9a9a9"/></svg>
<div class="a" style="left:1395.5px;top:465px;width:131.50px;height:24.00px;background:#fff;border-radius:4px;"></div>
<span class="t" style="left:1453.21px;top:473.00px;font-size:9.5px;color:#a3a3a3;letter-spacing:0.000px;">Watch</span>
<svg class="a" style="left:1405.5px;top:471.8px" width="13" height="12" viewBox="0 0 26 24"><path d="M6 2 c3-2 5 0 7 0 s4-2 7 0 c3.500 2.500 2 8 1 11 c-1 4-1.500 9-3 9 s-2-7-5-7 s-3.500 7-5 7 s-2-5-3-9 c-1-3-2.500-8.500 1-11z" fill="#a9a9a9"/></svg>
<div class="a" style="left:1250.5px;top:504px;width:130.50px;height:24.00px;background:#fff;border-radius:4px;"></div>
<span class="t" style="left:1298.05px;top:512.00px;font-size:9.5px;color:#a3a3a3;letter-spacing:0.000px;">Conditions</span>
<svg class="a" style="left:1260.5px;top:510.8px" width="13" height="12" viewBox="0 0 26 24"><path d="M6 2 c3-2 5 0 7 0 s4-2 7 0 c3.500 2.500 2 8 1 11 c-1 4-1.500 9-3 9 s-2-7-5-7 s-3.500 7-5 7 s-2-5-3-9 c-1-3-2.500-8.500 1-11z" fill="#a9a9a9"/></svg>
<svg class="a" style="left:1260.5px;top:510.8px" width="16" height="13" viewBox="0 0 32 26"><circle cx="25" cy="19" r="3.500" fill="#a9a9a9"/><circle cx="9" cy="8" r="4" fill="#e2e2e2"/></svg>
<div class="a" style="left:1395.5px;top:504px;width:131.50px;height:24.00px;background:#b5c8e2;border-radius:4px;"></div>
<span class="t" style="left:1449.61px;top:512.00px;font-size:9.5px;font-weight:bold;color:#1a1a1a;letter-spacing:0.000px;">Legend</span>
<svg class="a" style="left:1405.5px;top:510.8px" width="13" height="12" viewBox="0 0 26 24"><path d="M6 2 c3-2 5 0 7 0 s4-2 7 0 c3.500 2.500 2 8 1 11 c-1 4-1.500 9-3 9 s-2-7-5-7 s-3.500 7-5 7 s-2-5-3-9 c-1-3-2.500-8.500 1-11z" fill="#222"/></svg>
<div class="a" style="left:4px;top:619px;width:1229.50px;height:102.50px;background:#fff;border:1px solid #3a3a3a;box-sizing:border-box;"></div>
<div class="a" style="left:5px;top:620px;width:1227.50px;height:17.00px;background:#b5c5de;"></div>
<div class="a" style="left:5px;top:637px;width:1215.50px;height:16.75px;background:#e8e8e8;"></div>
<div class="a" style="left:5px;top:637px;width:1215.50px;height:1.00px;background:rgba(255,255,255,.5);"></div>
<div class="a" style="left:5px;top:653.75px;width:1215.50px;height:16.55px;background:#f1f1f1;"></div>
<div class="a" style="left:5px;top:654px;width:1215.50px;height:1.00px;background:rgba(255,255,255,.5);"></div>
<div class="a" style="left:5px;top:670.3px;width:1215.50px;height:16.50px;background:#e8e8e8;"></div>
<div class="a" style="left:5px;top:670px;width:1215.50px;height:1.00px;background:rgba(255,255,255,.5);"></div>
<div class="a" style="left:5px;top:686.8px;width:1215.50px;height:16.80px;background:#f1f1f1;"></div>
<div class="a" style="left:5px;top:687px;width:1215.50px;height:1.00px;background:rgba(255,255,255,.5);"></div>
<div class="a" style="left:5px;top:703.6px;width:1215.50px;height:16.90px;background:#e8e8e8;"></div>
<div class="a" style="left:5px;top:704px;width:1215.50px;height:1.00px;background:rgba(255,255,255,.5);"></div>
<div class="a" style="left:1220.5px;top:637px;width:12.00px;height:83.50px;background:#f3f3f3;"></div>
<div class="a" style="left:107.5px;top:637px;width:1.00px;height:83.50px;background:#fafafa;"></div>
<div class="a" style="left:107.5px;top:620px;width:1.00px;height:17.00px;background:#c6d2e6;"></div>
<div class="a" style="left:194.8px;top:637px;width:1.00px;height:83.50px;background:#fafafa;"></div>
<div class="a" style="left:194.8px;top:620px;width:1.00px;height:17.00px;background:#c6d2e6;"></div>
<div class="a" style="left:282.5px;top:637px;width:1.00px;height:83.50px;background:#fafafa;"></div>
<div class="a" style="left:282.5px;top:620px;width:1.00px;height:17.00px;background:#c6d2e6;"></div>
<div class="a" style="left:369.3px;top:637px;width:1.00px;height:83.50px;background:#fafafa;"></div>
<div class="a" style="left:369.3px;top:620px;width:1.00px;height:17.00px;background:#c6d2e6;"></div>
<div class="a" style="left:660.3px;top:637px;width:1.00px;height:83.50px;background:#fafafa;"></div>
<div class="a" style="left:660.3px;top:620px;width:1.00px;height:17.00px;background:#c6d2e6;"></div>
<div class="a" style="left:747.5px;top:637px;width:1.00px;height:83.50px;background:#fafafa;"></div>
<div class="a" style="left:747.5px;top:620px;width:1.00px;height:17.00px;background:#c6d2e6;"></div>
<div class="a" style="left:834.8px;top:637px;width:1.00px;height:83.50px;background:#fafafa;"></div>
<div class="a" style="left:834.8px;top:620px;width:1.00px;height:17.00px;background:#c6d2e6;"></div>
<div class="a" style="left:906.9px;top:637px;width:1.00px;height:83.50px;background:#fafafa;"></div>
<div class="a" style="left:906.9px;top:620px;width:1.00px;height:17.00px;background:#c6d2e6;"></div>
<div class="a" style="left:993.7px;top:637px;width:1.00px;height:83.50px;background:#fafafa;"></div>
<div class="a" style="left:993.7px;top:620px;width:1.00px;height:17.00px;background:#c6d2e6;"></div>
<div class="a" style="left:1081.5px;top:637px;width:1.00px;height:83.50px;background:#fafafa;"></div>
<div class="a" style="left:1081.5px;top:620px;width:1.00px;height:17.00px;background:#c6d2e6;"></div>
<div class="a" style="left:1168.5px;top:637px;width:1.00px;height:83.50px;background:#fafafa;"></div>
<div class="a" style="left:1168.5px;top:620px;width:1.00px;height:17.00px;background:#c6d2e6;"></div>
<span class="t" style="left:11.00px;top:625.00px;font-size:9.2px;font-weight:bold;color:#1f1f1f;transform:scaleX(0.8668);transform-origin:0 0;">Type</span>
<span class="t" style="left:113.00px;top:625.00px;font-size:9.2px;font-weight:bold;color:#1f1f1f;transform:scaleX(0.8784);transform-origin:0 0;">Date</span>
<span class="t" style="left:200.00px;top:625.00px;font-size:9.2px;font-weight:bold;color:#1f1f1f;transform:scaleX(0.8163);transform-origin:0 0;">St</span>
<span class="t" style="left:287.00px;top:625.00px;font-size:9.2px;font-weight:bold;color:#1f1f1f;transform:scaleX(0.8490);transform-origin:0 0;">Code</span>
<span class="t" style="left:374.00px;top:625.00px;font-size:9.2px;font-weight:bold;color:#1f1f1f;transform:scaleX(0.8606);transform-origin:0 0;">Description</span>
<span class="t" style="left:665.00px;top:625.00px;font-size:9.2px;font-weight:bold;color:#1f1f1f;transform:scaleX(0.8456);transform-origin:0 0;">Th</span>
<span class="t" style="left:752.00px;top:625.00px;font-size:9.2px;font-weight:bold;color:#1f1f1f;transform:scaleX(0.8707);transform-origin:0 0;">Surf</span>
<span class="t" style="left:840.00px;top:625.00px;font-size:9.2px;font-weight:bold;color:#1f1f1f;transform:scaleX(0.8198);transform-origin:0 0;">Prdr</span>
<span class="t" style="left:1086.00px;top:625.00px;font-size:9.2px;font-weight:bold;color:#1f1f1f;transform:scaleX(0.8446);transform-origin:0 0;">Office</span>
<span class="t" style="left:1173.00px;top:625.00px;font-size:9.2px;font-weight:bold;color:#1f1f1f;transform:scaleX(0.9035);transform-origin:0 0;">N</span>
<span class="t" style="left:958.50px;top:625.00px;font-size:9.2px;font-weight:bold;color:#1f1f1f;transform:scaleX(0.9224);transform-origin:0 0;">Est. Ins.</span>
<span class="t" style="left:1065.50px;top:625.00px;font-size:9.2px;font-weight:bold;color:#1f1f1f;transform:scaleX(0.8205);transform-origin:0 0;">Fee</span>
<span class="t" style="left:11.00px;top:641.00px;font-size:10.2px;color:#7f7f7f;transform:scaleX(0.8346);transform-origin:0 0;">PRE-EXISTING</span>
<span class="t" style="left:113.00px;top:641.00px;font-size:10.2px;color:#7f7f7f;transform:scaleX(0.8431);transform-origin:0 0;">10/13/2023</span>
<span class="t" style="left:374.00px;top:641.00px;font-size:10.2px;color:#7f7f7f;transform:scaleX(0.8433);transform-origin:0 0;">Missing: Deciduous</span>
<span class="t" style="left:666.00px;top:641.00px;font-size:10.2px;color:#7f7f7f;transform:scaleX(0.8153);transform-origin:0 0;">H</span>
<span class="t" style="left:1087.00px;top:641.00px;font-size:10.2px;color:#7f7f7f;transform:scaleX(0.7853);transform-origin:0 0;">OD</span>
<span class="t" style="left:970.00px;top:641.00px;font-size:10.2px;color:#7f7f7f;transform:scaleX(0.8627);transform-origin:0 0;">$0.00</span>
<span class="t" style="left:1058.00px;top:641.00px;font-size:10.2px;color:#7f7f7f;transform:scaleX(0.8627);transform-origin:0 0;">$0.00</span>
<span class="t" style="left:11.00px;top:657.00px;font-size:10.2px;color:#7f7f7f;transform:scaleX(0.8346);transform-origin:0 0;">PRE-EXISTING</span>
<span class="t" style="left:113.00px;top:657.00px;font-size:10.2px;color:#7f7f7f;transform:scaleX(0.8431);transform-origin:0 0;">10/13/2023</span>
<span class="t" style="left:374.00px;top:657.00px;font-size:10.2px;color:#7f7f7f;transform:scaleX(0.8400);transform-origin:0 0;">Missing: Crown</span>
<span class="t" style="left:666.00px;top:657.00px;font-size:10.2px;color:#7f7f7f;transform:scaleX(0.7934);transform-origin:0 0;">12</span>
<span class="t" style="left:1087.00px;top:657.00px;font-size:10.2px;color:#7f7f7f;transform:scaleX(0.7853);transform-origin:0 0;">OD</span>
<span class="t" style="left:970.00px;top:657.00px;font-size:10.2px;color:#7f7f7f;transform:scaleX(0.8627);transform-origin:0 0;">$0.00</span>
<span class="t" style="left:1058.00px;top:657.00px;font-size:10.2px;color:#7f7f7f;transform:scaleX(0.8627);transform-origin:0 0;">$0.00</span>
<span class="t" style="left:11.00px;top:674.00px;font-size:10.2px;color:#7f7f7f;transform:scaleX(0.8346);transform-origin:0 0;">PRE-EXISTING</span>
<span class="t" style="left:113.00px;top:674.00px;font-size:10.2px;color:#7f7f7f;transform:scaleX(0.8431);transform-origin:0 0;">10/13/2023</span>
<span class="t" style="left:374.00px;top:674.00px;font-size:10.2px;color:#7f7f7f;transform:scaleX(0.8400);transform-origin:0 0;">Missing: Crown</span>
<span class="t" style="left:666.00px;top:674.00px;font-size:10.2px;color:#7f7f7f;transform:scaleX(0.7934);transform-origin:0 0;">13</span>
<span class="t" style="left:1087.00px;top:674.00px;font-size:10.2px;color:#7f7f7f;transform:scaleX(0.7853);transform-origin:0 0;">OD</span>
<span class="t" style="left:970.00px;top:674.00px;font-size:10.2px;color:#7f7f7f;transform:scaleX(0.8627);transform-origin:0 0;">$0.00</span>
<span class="t" style="left:1058.00px;top:674.00px;font-size:10.2px;color:#7f7f7f;transform:scaleX(0.8627);transform-origin:0 0;">$0.00</span>
<span class="t" style="left:11.00px;top:690.00px;font-size:10.2px;color:#7f7f7f;transform:scaleX(0.8346);transform-origin:0 0;">PRE-EXISTING</span>
<span class="t" style="left:113.00px;top:690.00px;font-size:10.2px;color:#7f7f7f;transform:scaleX(0.8431);transform-origin:0 0;">10/13/2023</span>
<span class="t" style="left:374.00px;top:690.00px;font-size:10.2px;color:#7f7f7f;transform:scaleX(0.8433);transform-origin:0 0;">Missing: Deciduous</span>
<span class="t" style="left:666.00px;top:690.00px;font-size:10.2px;color:#7f7f7f;transform:scaleX(0.8791);transform-origin:0 0;">I</span>
<span class="t" style="left:1087.00px;top:690.00px;font-size:10.2px;color:#7f7f7f;transform:scaleX(0.7853);transform-origin:0 0;">OD</span>
<span class="t" style="left:970.00px;top:690.00px;font-size:10.2px;color:#7f7f7f;transform:scaleX(0.8627);transform-origin:0 0;">$0.00</span>
<span class="t" style="left:1058.00px;top:690.00px;font-size:10.2px;color:#7f7f7f;transform:scaleX(0.8627);transform-origin:0 0;">$0.00</span>
<span class="t" style="left:11.00px;top:707.00px;font-size:10.2px;color:#1e50d0;transform:scaleX(0.8352);transform-origin:0 0;">LEDGER</span>
<span class="t" style="left:113.00px;top:707.00px;font-size:10.2px;color:#1e50d0;transform:scaleX(0.8383);transform-origin:0 0;">4/16/2024</span>
<span class="t" style="left:287.00px;top:707.00px;font-size:10.2px;color:#1e50d0;transform:scaleX(0.8767);transform-origin:0 0;">D1110</span>
<span class="t" style="left:374.00px;top:707.00px;font-size:10.2px;color:#1e50d0;transform:scaleX(0.8533);transform-origin:0 0;">Prophylaxis - Adult</span>
<span class="t" style="left:840.00px;top:707.00px;font-size:10.2px;color:#1e50d0;transform:scaleX(0.8435);transform-origin:0 0;">LC RDH</span>
<span class="t" style="left:1087.00px;top:707.00px;font-size:10.2px;color:#1e50d0;transform:scaleX(0.7853);transform-origin:0 0;">OD</span>
<span class="t" style="left:965.50px;top:707.00px;font-size:10.2px;color:#1e50d0;transform:scaleX(0.8501);transform-origin:0 0;">$50.00</span>
<span class="t" style="left:1053.50px;top:707.00px;font-size:10.2px;color:#1e50d0;transform:scaleX(0.8501);transform-origin:0 0;">$76.00</span>
<div class="a" style="left:1219px;top:620.4px;width:13.50px;height:11.60px;background:#3f3f3f;"></div>
<svg class="a" style="left:1219px;top:620.400px" width="13.500" height="11.600" viewBox="0 0 27 23"><path d="M13.500 2 L24 11 h-5 v8 h-11 v-8 h-5z" fill="#fff"/></svg>
<div class="a" style="left:1223px;top:643.500px;border:4px solid transparent;border-bottom:5px solid #8b8b8b;border-top:0"></div>
<div class="a" style="left:1223px;top:708.500px;border:4px solid transparent;border-top:5px solid #8b8b8b;border-bottom:0"></div>
<div class="a" style="left:1224px;top:689.3px;width:6.50px;height:13.70px;background:#8c8c8c;border-radius:3.500px;"></div>
<svg class="a" style="left:0;top:0" width="1536" height="70" viewBox="0 0 1536 70"><g transform="translate(4.9 31)"><rect x="0" y="4" width="25.500" height="24" rx="2.200" fill="#fff"/><rect x="5.2" y="0" width="4" height="8.500" rx="1.300" fill="#fff"/><rect x="6.4" y="1.500" width="1.600" height="5.400" rx=".8" fill="#5cb0ff"/><rect x="17" y="0" width="4" height="8.500" rx="1.300" fill="#fff"/><rect x="18.2" y="1.500" width="1.600" height="5.400" rx=".8" fill="#5cb0ff"/><rect x="1.90" y="10.40" width="4.200" height="4.400" fill="#5cb0ff"/><rect x="7.45" y="10.40" width="4.200" height="4.400" fill="#5cb0ff"/><rect x="13.00" y="10.40" width="4.200" height="4.400" fill="#5cb0ff"/><rect x="18.55" y="10.40" width="4.200" height="4.400" fill="#5cb0ff"/><rect x="1.90" y="16.15" width="4.200" height="4.400" fill="#5cb0ff"/><rect x="7.45" y="16.15" width="4.200" height="4.400" fill="#5cb0ff"/><rect x="13.00" y="16.15" width="4.200" height="4.400" fill="#5cb0ff"/><rect x="18.55" y="16.15" width="4.200" height="4.400" fill="#5cb0ff"/><rect x="1.90" y="21.90" width="4.200" height="4.400" fill="#5cb0ff"/><rect x="7.45" y="21.90" width="4.200" height="4.400" fill="#5cb0ff"/><rect x="13.00" y="21.90" width="4.200" height="4.400" fill="#5cb0ff"/><rect x="18.55" y="21.90" width="4.200" height="4.400" fill="#5cb0ff"/></g><g transform="translate(37.7 31)"><path d="M13.500 0.200 L18.600 5.200 V2.600 H21.400 V8 L27 14.700 H23 V28 H3.600 V14.700 H0 Z" fill="#fff"/><rect x="9.300" y="16.300" width="3.600" height="3.800" fill="#5cb0ff"/><rect x="14" y="16.300" width="3.600" height="3.800" fill="#5cb0ff"/><rect x="9.300" y="21.200" width="3.600" height="3.800" fill="#5cb0ff"/><rect x="14" y="21.200" width="3.600" height="3.800" fill="#5cb0ff"/></g><g transform="translate(68.9 31)"><circle cx="10.400" cy="5.600" r="5.500" fill="#fff"/><path d="M0.200 24.700 V21 C0.200 14.500 5 11.800 10.400 11.800 S20.600 14.500 20.600 21 V24.700Z" fill="#fff"/><circle cx="20.800" cy="19.400" r="8.900" fill="#5cb0ff"/><circle cx="20.800" cy="19.400" r="6.600" fill="none" stroke="#fff" stroke-width="2.100"/><path d="M20.800 15.700 V23.100 M17.100 19.400 H24.500" stroke="#fff" stroke-width="2.300"/></g><g transform="translate(101.7 31)"><rect x="0.200" y="0" width="9.600" height="3.8" fill="#fff"/><rect x="11" y="0" width="12" height="3.8" fill="#fff"/><rect x="0.200" y="5.4" width="9.600" height="2.3" fill="#fff"/><rect x="11" y="5.4" width="12" height="2.3" fill="#fff"/><rect x="0.200" y="9.2" width="9.600" height="2.3" fill="#fff"/><rect x="11" y="9.2" width="12" height="2.3" fill="#fff"/><rect x="0.200" y="13" width="9.600" height="2.3" fill="#fff"/><rect x="11" y="13" width="12" height="2.3" fill="#fff"/><rect x="0.200" y="16.8" width="9.600" height="3.4" fill="#fff"/><rect x="11" y="16.8" width="12" height="3.4" fill="#fff"/><path d="M24.600 2.600 L30 8 L10.800 27.200 L3 30 L5.600 22 Z" fill="#5cb0ff"/><path d="M21.600 7.200 L24.300 4.500 a1.400 1.400 0 0 1 2 0 L28.200 6.400 a1.400 1.400 0 0 1 0 2 L25.500 11.100 Z M20.500 8.300 L24.400 12.200 L10.600 26 L6.700 22.100 Z M5.900 23.300 L9.400 26.800 L4.400 28.300 Z" fill="#fff"/></g><g transform="translate(134.3 31)"><text x="13.900" y="25.300" text-anchor="middle" font-family="Liberation Sans" font-weight="bold" font-size="34.500" fill="#fff" textLength="16.500" lengthAdjust="spacingAndGlyphs">$</text><path d="M0 14.500 L4.800 11.200 V17.800Z M27.400 14.500 L22.600 11.200 V17.800Z" fill="#fff"/><path d="M3.500 14.500 H8 M19.800 14.500 H24" stroke="#fff" stroke-width="1.300"/></g><g transform="translate(167.8 31)"><path d="M0 1.200 a1.200 1.200 0 0 1 1.200 -1.200 H6 a1.200 1.200 0 0 1 1.200 1.200 V6 H26 a1.200 1.200 0 0 1 1.200 1.200 V26.800 a1.200 1.200 0 0 1 -1.200 1.200 H1.200 a1.200 1.200 0 0 1 -1.200 -1.200Z" fill="#fff"/><rect x="8.800" y="0" width="6.200" height="4" rx="1" fill="#fff"/><rect x="16" y="0" width="7" height="4" rx="1" fill="#fff"/><g transform="translate(5.200 7.300) scale(.62 .80)"><path d="M6.500 2.200 c2.600-1.700 5.200 0 7.500 0 s4.900-1.700 7.500 0 c3.400 2.400 2.300 8.600 1.300 12.200 c-0.900 4-1.500 9.600-3.400 9.600 s-1.900-7.300-5.400-7.300 s-3.500 7.300-5.400 7.300 s-2.500-5.600-3.400-9.600 c-1-3.600-2.100-9.800 1.300-12.200z" fill="#5cb0ff"/></g></g><g transform="translate(200.6 31)"><path d="M0 4.400 a1.200 1.200 0 0 1 1.200 -1.200 H4.600 V7.400 H20 V3.200 H23.400 a1.200 1.200 0 0 1 1.200 1.200 V26.800 a1.200 1.200 0 0 1 -1.200 1.200 H1.200 a1.200 1.200 0 0 1 -1.200 -1.200Z" fill="#fff"/><rect x="5.90" y="0" width="2" height="6" rx=".9" fill="#fff"/><rect x="9.65" y="0" width="2" height="6" rx=".9" fill="#fff"/><rect x="13.40" y="0" width="2" height="6" rx=".9" fill="#fff"/><rect x="17.15" y="0" width="2" height="6" rx=".9" fill="#fff"/><text x="12.300" y="24" text-anchor="middle" font-family="Liberation Sans" font-weight="bold" font-size="15.800" fill="#5cb0ff" stroke="#5cb0ff" stroke-width=".35" textLength="19" lengthAdjust="spacingAndGlyphs">TX</text></g><g transform="translate(232.9 31)"><path d="M0 4.400 a1.200 1.200 0 0 1 1.200 -1.200 H4.600 V7.400 H20 V3.200 H23.400 a1.200 1.200 0 0 1 1.200 1.200 V26.800 a1.200 1.200 0 0 1 -1.200 1.200 H1.200 a1.200 1.200 0 0 1 -1.200 -1.200Z" fill="#fff"/><rect x="5.90" y="0" width="2" height="6" rx=".9" fill="#fff"/><rect x="9.65" y="0" width="2" height="6" rx=".9" fill="#fff"/><rect x="13.40" y="0" width="2" height="6" rx=".9" fill="#fff"/><rect x="17.15" y="0" width="2" height="6" rx=".9" fill="#fff"/><text x="12.300" y="24" text-anchor="middle" font-family="Liberation Sans" font-weight="bold" font-size="15.800" fill="#5cb0ff" stroke="#5cb0ff" stroke-width=".35" textLength="19" lengthAdjust="spacingAndGlyphs">PN</text></g><g transform="translate(265.2 31)"><text x="-1.700" y="25.600" font-family="Liberation Sans" font-weight="bold" font-size="37" fill="#fff" textLength="22.600" lengthAdjust="spacingAndGlyphs">R</text><path d="M9.500 14.500 L13 14.500 L25.700 28 L20.700 28 Z M20.800 14.500 L25.500 14.500 L12.800 28 L8 28Z" fill="#fff"/></g><g transform="translate(296.3 31)"><path d="M0 5 a5 5 0 0 1 5 -5 H23 a5 5 0 0 1 5 5 V19 L19 28 H5 a5 5 0 0 1 -5 -5Z" fill="#fff"/><path d="M6.500 7.500 H21.500 M6.500 13.700 H21.500" stroke="#5cb0ff" stroke-width="2.600" stroke-linecap="round"/><path d="M19.500 26 V20 H25.500Z" fill="#5cb0ff"/></g><g transform="translate(328.9 31)"><rect x="0" y="0" width="28" height="28" rx="2.600" fill="#fff"/><rect x="1.800" y="4" width="24.400" height="1.700" fill="#5cb0ff"/><rect x="1.800" y="8.2" width="24.400" height="1.700" fill="#5cb0ff"/><rect x="1.800" y="12.4" width="24.400" height="1.700" fill="#5cb0ff"/><rect x="1.800" y="16.6" width="11.700" height="1.700" fill="#5cb0ff"/><rect x="1.800" y="20.8" width="11.700" height="1.700" fill="#5cb0ff"/><rect x="1.800" y="25" width="11.700" height="1.700" fill="#5cb0ff"/><path d="M20.900 15 L22.500 19.300 L27 19.500 L23.500 22.300 L24.700 26.700 L20.900 24.200 L17.100 26.700 L18.300 22.300 L14.800 19.500 L19.300 19.300Z" fill="#5cb0ff"/></g><g transform="translate(361.7 31)"><path d="M0 1.600 a1.600 1.600 0 0 1 1.600 -1.600 H25.700 a1.600 1.600 0 0 1 1.600 1.600 V20.400 a1.600 1.600 0 0 1 -1.600 1.600 H16 L6.200 28 L7.800 22 H1.600 a1.600 1.600 0 0 1 -1.600 -1.600Z" fill="#fff"/><rect x="4.800" y="3.7" width="18" height="2" fill="#5cb0ff"/><rect x="4.800" y="7.5" width="18" height="2" fill="#5cb0ff"/><rect x="4.800" y="11.3" width="18" height="2" fill="#5cb0ff"/><rect x="4.800" y="15" width="10.5" height="2" fill="#5cb0ff"/><circle cx="26.5" cy="6" r="5" fill="#e81518"/><text x="26.5" y="9.5" text-anchor="middle" font-family="Liberation Sans" font-weight="bold" font-size="10" fill="#fff" letter-spacing="-.6">0</text></g><g transform="translate(403 31)"><path d="M0 1.600 a1.600 1.600 0 0 1 1.600 -1.600 H26.400 a1.600 1.600 0 0 1 1.600 1.600 V20.400 a1.600 1.600 0 0 1 -1.600 1.600 H21 L21.800 28 L12.500 22 H1.600 a1.600 1.600 0 0 1 -1.600 -1.600Z" fill="#fff"/><text x="13.700" y="16" text-anchor="middle" font-family="Liberation Sans" font-weight="bold" font-size="13" fill="#5cb0ff" textLength="25.500" lengthAdjust="spacingAndGlyphs">SMS</text><circle cx="27.1" cy="6" r="5" fill="#e81518"/><text x="27.1" y="9.5" text-anchor="middle" font-family="Liberation Sans" font-weight="bold" font-size="10" fill="#fff" letter-spacing="-.6">0</text></g><g transform="translate(445 31)"><g fill="none" stroke="#fff" stroke-width="1.300"><circle cx="11.9" cy="12.3" r="11"/><ellipse cx="11.9" cy="12.3" rx="5" ry="11"/><path d="M11.9 1.3000000000000007V23.3M0.9000000000000004 12.3H22.9M2.3000000000000007 6.800000000000001H21.5M2.3000000000000007 17.8H21.5"/></g><circle cx="21.200" cy="16.300" r="6" fill="#5cb0ff"/><path d="M13 29 V25 c0-5 4-7 8.200-7 s8.200 2 8.200 7 V29Z" fill="#5cb0ff"/><circle cx="21.200" cy="16.300" r="4.500" fill="#fff"/><path d="M14.400 28 V25.500 c0-3.600 3-5 6.800-5 s6.800 1.400 6.800 5 V28Z" fill="#fff"/><rect x="22.3" y="0.2999999999999998" width="15.400" height="11.400" rx="5.600" fill="#e81518"/><text x="30" y="9.5" text-anchor="middle" font-family="Liberation Sans" font-weight="bold" font-size="10" fill="#fff" letter-spacing="-.6">9+</text></g><g transform="translate(492.5 31)"><circle cx="14.2" cy="14.1" r="14.1" fill="#fff"/><g fill="none" stroke="#5cb0ff" stroke-width="1.500"><ellipse cx="14.2" cy="14.1" rx="6.800" ry="15.1"/><path d="M0 14.1H29M1 6.200H27.500M1 22H27.500"/></g><rect x="8.300" y="6.800" width="11.800" height="14.800" fill="#fff"/><circle cx="14.2" cy="11.500" r="3.400" fill="#5cb0ff"/><path d="M8.700 21.500 c0-4.400 2.500-5.800 5.500-5.800 s5.500 1.400 5.500 5.800Z" fill="#5cb0ff"/></g><g transform="translate(525.3 31)"><path d="M14.400 0 C18 2.500 23 3.800 28.600 4.200 C28.600 16 24 24.500 14.400 28.500 C4.800 24.500 0.200 16 0.200 4.200 C5.800 3.800 10.800 2.500 14.400 0Z" fill="#fff"/><path d="M6.800 11.800 H15 V8 L21.800 14.300 L15 20.600 V16.800 H6.800Z" fill="#5cb0ff"/></g><g transform="translate(557.5 31)"><g fill="none" stroke="#fff" stroke-width="2.300"><path d="M2.900 16.500 A11.300 11.300 0 0 1 20.500 4.800"/><path d="M25.100 11.800 A11.300 11.300 0 0 1 7.500 23.400"/></g><path d="M0 14.800 L6.600 15.500 L2.600 21Z M28 13.500 L21.400 12.800 L25.400 7.200Z" fill="#fff"/><circle cx="14" cy="9.600" r="3" fill="#fff"/><path d="M8.500 20.500 V17.500 c0-3 2.400-4 5.500-4 s5.500 1 5.500 4 V20.500Z" fill="#fff"/><path d="M14 13.800 V18" stroke="#5cb0ff" stroke-width="1"/></g><g transform="translate(590 31)"><g stroke="#fff" stroke-width=".8" fill="none"><path d="M14.3 14.1L14.3 3.3"/><path d="M14.3 14.1L23.7 8.7"/><path d="M14.3 14.1L23.7 19.5"/><path d="M14.3 14.1L14.3 24.9"/><path d="M14.3 14.1L4.9 19.5"/><path d="M14.3 14.1L4.9 8.7"/></g><circle cx="14.3" cy="14.1" r="4.3" fill="#5cb0ff" stroke="#fff" stroke-width=".8"/><circle cx="14.3" cy="13.1" r="1.300" fill="#fff"/><path d="M12.3 16.7 q2 -3.400 4 0Z" fill="#fff"/><circle cx="14.3" cy="3.3" r="3.6" fill="#5cb0ff" stroke="#fff" stroke-width=".8"/><circle cx="14.3" cy="2.3" r="1.300" fill="#fff"/><path d="M12.3 5.9 q2 -3.400 4 0Z" fill="#fff"/><circle cx="23.7" cy="8.7" r="3.6" fill="#5cb0ff" stroke="#fff" stroke-width=".8"/><circle cx="23.7" cy="7.7" r="1.300" fill="#fff"/><path d="M21.7 11.3 q2 -3.400 4 0Z" fill="#fff"/><circle cx="23.7" cy="19.5" r="3.6" fill="#5cb0ff" stroke="#fff" stroke-width=".8"/><circle cx="23.7" cy="18.5" r="1.300" fill="#fff"/><path d="M21.7 22.1 q2 -3.400 4 0Z" fill="#fff"/><circle cx="14.3" cy="24.9" r="3.6" fill="#5cb0ff" stroke="#fff" stroke-width=".8"/><circle cx="14.3" cy="23.9" r="1.300" fill="#fff"/><path d="M12.3 27.5 q2 -3.400 4 0Z" fill="#fff"/><circle cx="4.9" cy="19.5" r="3.6" fill="#5cb0ff" stroke="#fff" stroke-width=".8"/><circle cx="4.9" cy="18.5" r="1.300" fill="#fff"/><path d="M2.9 22.1 q2 -3.400 4 0Z" fill="#fff"/><circle cx="4.9" cy="8.7" r="3.6" fill="#5cb0ff" stroke="#fff" stroke-width=".8"/><circle cx="4.9" cy="7.7" r="1.300" fill="#fff"/><path d="M2.9 11.3 q2 -3.400 4 0Z" fill="#fff"/></g><g transform="translate(622.9 31)"><rect x="0" y="0" width="27.400" height="28" rx="2.400" fill="#fff"/><path d="M2.600 2.600 V25.200 H25" fill="none" stroke="#5cb0ff" stroke-width="1.100"/><path d="M5.800 21 L9.200 14 L12.400 17 L16.200 10.600 L19.600 13.800 L23 6.600" fill="none" stroke="#5cb0ff" stroke-width="1.500"/><circle cx="5.8" cy="21" r="1" fill="#5cb0ff"/><circle cx="9.2" cy="14" r="1" fill="#5cb0ff"/><circle cx="12.4" cy="17" r="1" fill="#5cb0ff"/><circle cx="16.2" cy="10.6" r="1" fill="#5cb0ff"/><circle cx="19.6" cy="13.8" r="1" fill="#5cb0ff"/><circle cx="23" cy="6.6" r="1" fill="#5cb0ff"/></g><g transform="translate(655.2 31)"><circle cx="13.900" cy="14.100" r="14" fill="#fff"/><path d="M13.900 6.500 V15.200 L20 21" fill="none" stroke="#5cb0ff" stroke-width="1.800" stroke-linecap="round" stroke-linejoin="round"/></g><g transform="translate(687.7 31)"><g fill="none" stroke="#fff" stroke-width="1.400"><circle cx="13.8" cy="14" r="12.8"/><ellipse cx="13.8" cy="14" rx="6" ry="12.8"/><path d="M13.8 1.1999999999999993V26.8M1.0 14H26.6M2.8000000000000007 7.6Q13.8 10.6 24.8 7.6M2.8000000000000007 20.4Q13.8 17.4 24.8 20.4"/></g><path d="M12 11.500 L30 18 V30 H16Z" fill="#5cb0ff"/><path d="M14.600 13.500 L26.800 17.600 L22.200 20 L28.200 26 L25.800 28.400 L19.800 22.400 L17.600 27Z" fill="#fff"/></g><g transform="translate(720.4 31)"><rect x="0" y="0" width="27.500" height="28" rx="2.600" fill="#fff"/><g transform="translate(0.200 2.600) scale(.965 .95)"><path d="M6.500 2.200 c2.600-1.700 5.200 0 7.500 0 s4.900-1.700 7.500 0 c3.400 2.400 2.300 8.600 1.300 12.200 c-0.900 4-1.500 9.600-3.400 9.600 s-1.900-7.300-5.400-7.300 s-3.500 7.300-5.400 7.300 s-2.500-5.600-3.400-9.600 c-1-3.600-2.100-9.800 1.300-12.200z" fill="#5cb0ff"/></g><text x="13.700" y="16.200" text-anchor="middle" font-family="Liberation Sans" font-weight="bold" font-size="10.500" fill="#fff">2</text></g><g transform="translate(752.3 31)"><rect x="0" y="0" width="28" height="28" rx="2.600" fill="#fff"/><g transform="translate(0 2.600) scale(1 .95)"><path d="M6.500 2.200 c2.600-1.700 5.200 0 7.500 0 s4.900-1.700 7.500 0 c3.400 2.400 2.300 8.600 1.300 12.200 c-0.900 4-1.500 9.600-3.400 9.600 s-1.900-7.300-5.400-7.300 s-3.500 7.300-5.400 7.300 s-2.500-5.600-3.400-9.600 c-1-3.600-2.100-9.800 1.300-12.200z" fill="#5cb0ff"/></g></g><g transform="translate(785 31)"><path d="M5 0 H17 L22 4.600 V9 H5Z" fill="#fff"/><path d="M17 0.500 V5 H21.500" fill="none" stroke="#5cb0ff" stroke-width="1"/><path d="M0 12 a2 2 0 0 1 2 -2 H26 a2 2 0 0 1 2 2 V23 a2 2 0 0 1 -2 2 H23.500 V17 H4.500 V25 H2 a2 2 0 0 1 -2 -2Z" fill="#fff"/><rect x="3.200" y="12.300" width="3" height="1.300" fill="#5cb0ff"/><rect x="6.500" y="18.500" width="15" height="9.500" fill="#fff"/><path d="M8.800 21.200 H19.200 M8.800 24.200 H19.200" stroke="#5cb0ff" stroke-width="1.300"/><path d="M1.500 8.500 L2.500 6.500 M26.500 8.500 L25.500 6.500" stroke="#fff" stroke-width="1"/></g><g transform="translate(819.3 31)"><rect x="0" y="0" width="28.400" height="28" rx="4" fill="#fff"/><path d="M7.600 5.400 L14.200 11.400 L20.800 5.400 V10.400 L14.200 16.400 L7.600 10.400Z M7.600 13.200 L14.200 19.200 L20.800 13.200 V18.200 L14.200 24.200 L7.600 18.200Z" fill="#5cb0ff"/></g></svg>
<div class="a" style="left:852px;top:30px;width:147.00px;height:30.00px;background:#fff;"></div>
<span class="t" style="left:856.00px;top:40.00px;font-size:12px;font-style:italic;color:#b0b0b0;letter-spacing:0.455px;">Search Patient...</span>
<svg class="a" style="left:0;top:0" width="1536" height="70" viewBox="0 0 1536 70"><g transform="translate(971 30.2)"><rect x="0" y="0" width="28" height="29.600" fill="#5cb0ff" stroke="#cfe3f7" stroke-width=".8"/><path d="M20.500 22.500 L26.300 28.300" stroke="#fff" stroke-width="2.800" stroke-linecap="round"/><circle cx="12.200" cy="13.800" r="12.100" fill="#fff"/><circle cx="12.200" cy="9.800" r="4.300" fill="#5cb0ff"/><path d="M4.200 21.800 c0-5.600 3.600-7 8-7 s8 1.400 8 7 q-3.700 2.800 -8 2.800 t-8 -2.800Z" fill="#5cb0ff"/></g><rect x="1005" y="34.200" width="12.200" height="12.200" rx="2" fill="#fff" stroke="#6b6b6b" stroke-width="1.100"/><g transform="translate(1020 31.5)"><path d="M20.500 21.500 L26.300 27.500" stroke="#fff" stroke-width="3" stroke-linecap="round"/><circle cx="11.700" cy="12.700" r="12.400" fill="#fff"/><circle cx="5.2" cy="10" r="2.5" fill="#5cb0ff"/><path d="M1.4000000000000004 18 c0-4 1.800-4.800 3.800-4.800 s3.800 .8 3.800 4.800Z" fill="#5cb0ff"/><circle cx="18.2" cy="10" r="2.5" fill="#5cb0ff"/><path d="M14.399999999999999 18 c0-4 1.800-4.800 3.800-4.800 s3.800 .8 3.800 4.800Z" fill="#5cb0ff"/><circle cx="11.700" cy="9.200" r="3.900" fill="#fff"/><path d="M5.500 20.800 c0-5.600 2.900-6.800 6.200-6.800 s6.200 1.200 6.200 6.800Z" fill="#fff"/><circle cx="11.700" cy="9.200" r="3" fill="#5cb0ff"/><path d="M6.700 20.300 c0-5 2.300-5.800 5-5.800 s5 .8 5 5.800Z" fill="#5cb0ff"/></g></svg>
<div class="a" style="left:0px;top:0px;width:2.30px;height:727.00px;background:#e2e3e4;"></div>
<div class="a" style="left:0px;top:8px;width:2.30px;height:9.00px;background:#2a2c30;"></div>
<div class="a" style="left:0px;top:63px;width:2.30px;height:28.50px;background:#c9ced4;"></div>
<div class="a" style="left:0px;top:186.3px;width:2.30px;height:31.70px;background:#8f96a3;"></div>
<div class="a" style="left:1534px;top:1px;width:2.00px;height:62.00px;background:#a9adb1;"></div>
<div class="a" style="left:1534px;top:91.5px;width:2.00px;height:94.80px;background:#c5c9cc;"></div>
<div class="a" style="left:1534px;top:218px;width:2.00px;height:509.00px;background:#e3e5e7;"></div>
</body></html>
